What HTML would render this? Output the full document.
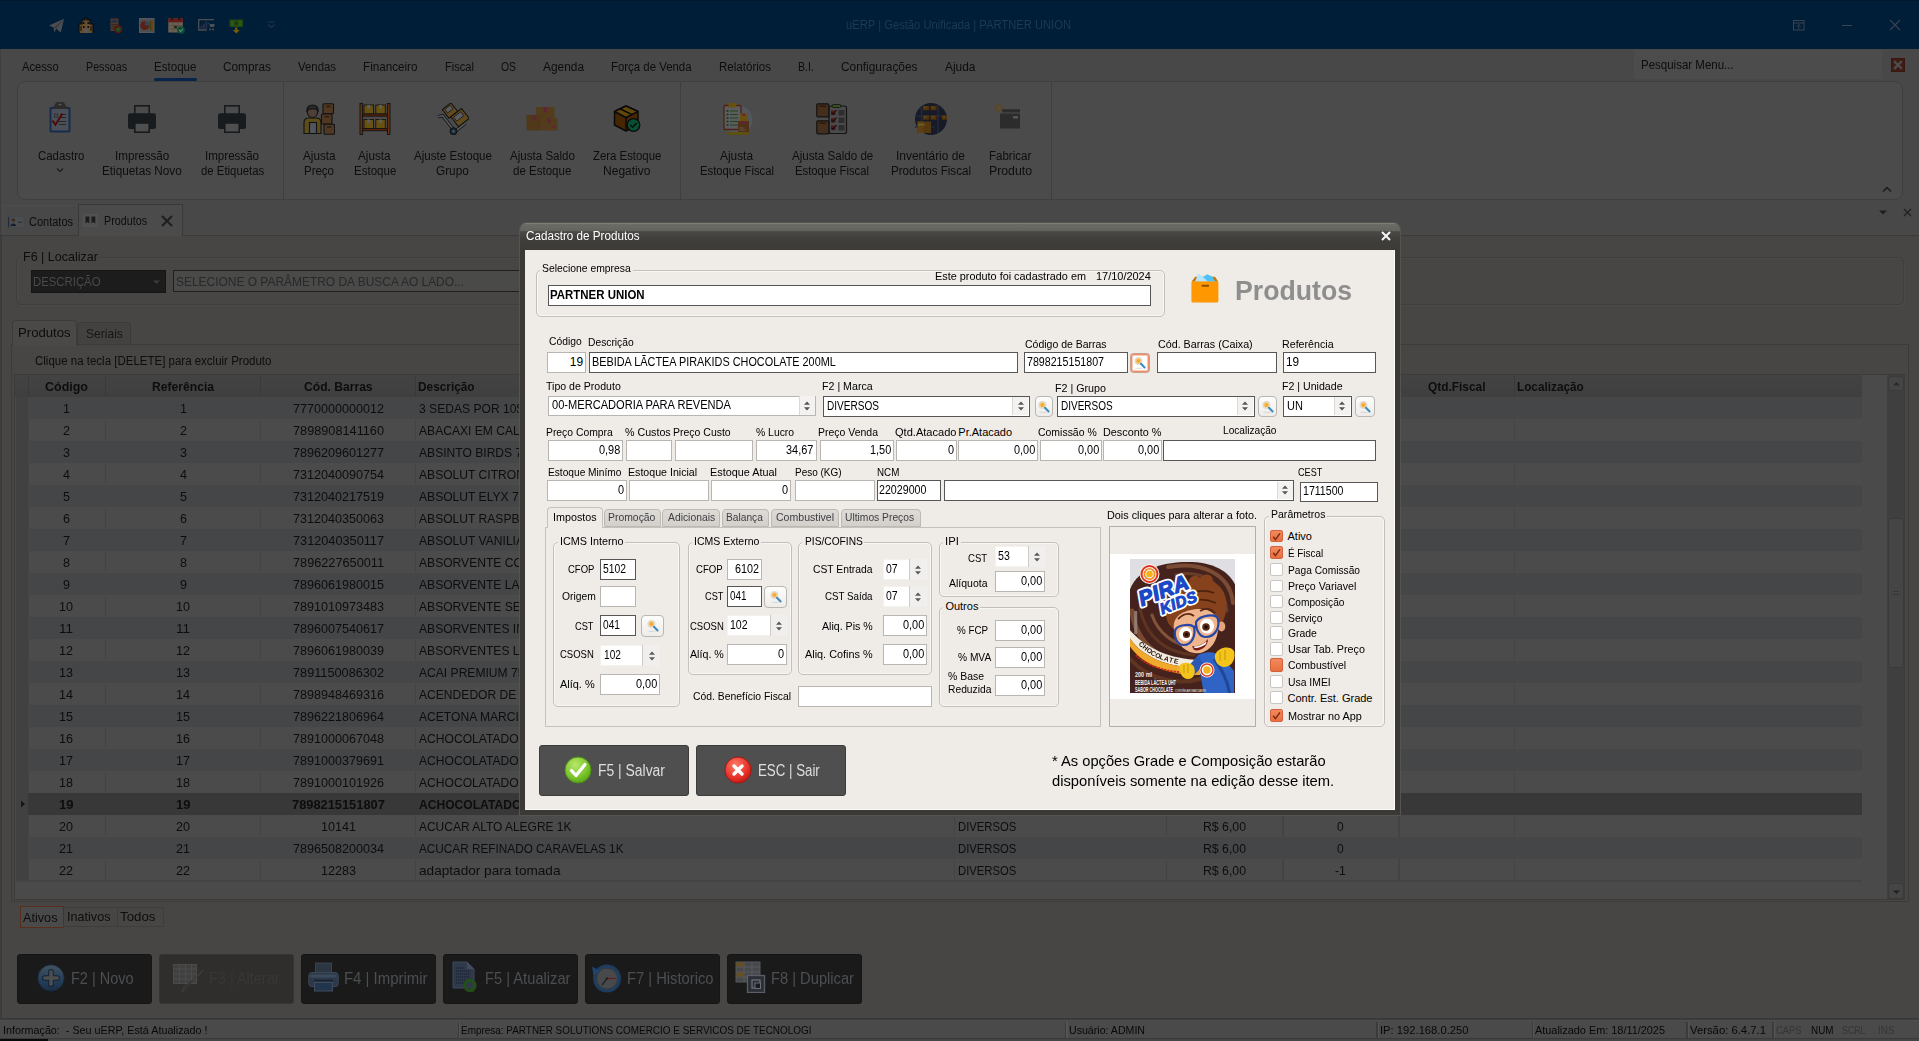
<!DOCTYPE html>
<html lang="pt-BR"><head><meta charset="utf-8"><title>uERP | Gestão Unificada | PARTNER UNION</title>
<style>
html,body{margin:0;padding:0;}
body{width:1919px;height:1041px;overflow:hidden;position:relative;background:#4c4c4c;font-family:"Liberation Sans",sans-serif;}
div,span,svg{position:absolute;box-sizing:border-box;}
.t{white-space:pre;line-height:1;transform-origin:0 50%;}

</style></head><body>

<div style="left:0px;top:0px;width:1919px;height:49px;background:#001e38;"></div>
<div style="left:0px;top:0px;width:1919px;height:1px;background:#00162b;"></div>
<span class="t" style="left:846px;top:18.84px;font-size:12px;color:#1e3953;transform:scaleX(0.9337);">uERP | Gestão Unificada | PARTNER UNION</span>
<div style="left:0px;top:49px;width:1919px;height:187px;background:#484848;"></div>
<div style="left:0px;top:49px;width:1px;height:992px;background:#3e3e3e;"></div>
<div style="left:1918px;top:236px;width:1px;height:783px;background:#3a3a3a;"></div>
<span class="t" style="left:22px;top:61.22px;font-size:12.5px;color:#0d0d0d;transform:scaleX(0.8927);">Acesso</span>
<span class="t" style="left:86px;top:61.22px;font-size:12.5px;color:#0d0d0d;transform:scaleX(0.855);">Pessoas</span>
<span class="t" style="left:154px;top:61.22px;font-size:12.5px;color:#0d0d0d;transform:scaleX(0.9264);">Estoque</span>
<span class="t" style="left:223px;top:61.22px;font-size:12.5px;color:#0d0d0d;transform:scaleX(0.9464);">Compras</span>
<span class="t" style="left:298px;top:61.22px;font-size:12.5px;color:#0d0d0d;transform:scaleX(0.9109);">Vendas</span>
<span class="t" style="left:363px;top:61.22px;font-size:12.5px;color:#0d0d0d;transform:scaleX(0.9336);">Financeiro</span>
<span class="t" style="left:445px;top:61.22px;font-size:12.5px;color:#0d0d0d;transform:scaleX(0.888);">Fiscal</span>
<span class="t" style="left:501px;top:61.22px;font-size:12.5px;color:#0d0d0d;transform:scaleX(0.8304);">OS</span>
<span class="t" style="left:543px;top:61.22px;font-size:12.5px;color:#0d0d0d;transform:scaleX(0.9511);">Agenda</span>
<span class="t" style="left:611px;top:61.22px;font-size:12.5px;color:#0d0d0d;transform:scaleX(0.912);">Força de Venda</span>
<span class="t" style="left:719px;top:61.22px;font-size:12.5px;color:#0d0d0d;transform:scaleX(0.9239);">Relatórios</span>
<span class="t" style="left:798px;top:61.22px;font-size:12.5px;color:#0d0d0d;transform:scaleX(0.8526);">B.I.</span>
<span class="t" style="left:841px;top:61.22px;font-size:12.5px;color:#0d0d0d;transform:scaleX(0.949);">Configurações</span>
<span class="t" style="left:945px;top:61.22px;font-size:12.5px;color:#0d0d0d;transform:scaleX(0.9536);">Ajuda</span>
<div style="left:154px;top:78px;width:43px;height:3px;background:#08244a;border-radius:1.5px;"></div>
<div style="left:1634px;top:50px;width:248px;height:29px;background:#4c4c4c;"></div>
<span class="t" style="left:1641px;top:58.3px;font-size:13px;color:#0d0d0d;transform:scaleX(0.8847);">Pesquisar Menu...</span>
<div style="left:1891px;top:58px;width:14px;height:14px;background:#3f1c13;border:1px solid #3a1810;"></div>
<svg style="left:1891px;top:58px;" width="14" height="14" viewBox="0 0 14 14"><path d="M4 4L10 10M10 4L4 10" stroke="#4d4d4d" stroke-width="2.4" stroke-linecap="square"/></svg>
<div style="left:17px;top:81px;width:1886px;height:119px;background:#4b4b4b;border:1px solid #3f3f3f;border-radius:8px;"></div>
<div style="left:283px;top:82px;width:1px;height:117px;background:#3f3f3f;"></div>
<div style="left:680px;top:82px;width:1px;height:117px;background:#3f3f3f;"></div>
<div style="left:1051px;top:82px;width:1px;height:117px;background:#3f3f3f;"></div>
<svg style="left:1880px;top:184px;" width="14" height="10" viewBox="0 0 14 10"><path d="M3 7.5L7 3.5L11 7.5" stroke="#1a1a1a" stroke-width="1.4" fill="none"/></svg>
<span class="t" style="left:37.5px;top:149.72px;font-size:12.5px;color:#0d0d0d;transform:scaleX(0.9126);">Cadastro</span>
<span class="t" style="left:115px;top:149.72px;font-size:12.5px;color:#0d0d0d;transform:scaleX(0.9304);">Impressão</span>
<span class="t" style="left:102px;top:164.72px;font-size:12.5px;color:#0d0d0d;transform:scaleX(0.9412);">Etiquetas Novo</span>
<span class="t" style="left:205px;top:149.72px;font-size:12.5px;color:#0d0d0d;transform:scaleX(0.9253);">Impressão</span>
<span class="t" style="left:200.5px;top:164.72px;font-size:12.5px;color:#0d0d0d;transform:scaleX(0.9108);">de Etiquetas</span>
<span class="t" style="left:303px;top:149.72px;font-size:12.5px;color:#0d0d0d;transform:scaleX(0.9353);">Ajusta</span>
<span class="t" style="left:304px;top:164.72px;font-size:12.5px;color:#0d0d0d;transform:scaleX(0.9187);">Preço</span>
<span class="t" style="left:358px;top:149.72px;font-size:12.5px;color:#0d0d0d;transform:scaleX(0.9353);">Ajusta</span>
<span class="t" style="left:354px;top:164.72px;font-size:12.5px;color:#0d0d0d;transform:scaleX(0.9221);">Estoque</span>
<span class="t" style="left:414px;top:149.72px;font-size:12.5px;color:#0d0d0d;transform:scaleX(0.9275);">Ajuste Estoque</span>
<span class="t" style="left:436px;top:164.72px;font-size:12.5px;color:#0d0d0d;transform:scaleX(0.9439);">Grupo</span>
<span class="t" style="left:510px;top:149.72px;font-size:12.5px;color:#0d0d0d;transform:scaleX(0.9261);">Ajusta Saldo</span>
<span class="t" style="left:513px;top:164.72px;font-size:12.5px;color:#0d0d0d;transform:scaleX(0.9217);">de Estoque</span>
<span class="t" style="left:593px;top:149.72px;font-size:12.5px;color:#0d0d0d;transform:scaleX(0.9101);">Zera Estoque</span>
<span class="t" style="left:603px;top:164.72px;font-size:12.5px;color:#0d0d0d;transform:scaleX(0.9626);">Negativo</span>
<span class="t" style="left:720px;top:149.72px;font-size:12.5px;color:#0d0d0d;transform:scaleX(0.9496);">Ajusta</span>
<span class="t" style="left:700px;top:164.72px;font-size:12.5px;color:#0d0d0d;transform:scaleX(0.9026);">Estoque Fiscal</span>
<span class="t" style="left:792px;top:149.72px;font-size:12.5px;color:#0d0d0d;transform:scaleX(0.9285);">Ajusta Saldo de</span>
<span class="t" style="left:795px;top:164.72px;font-size:12.5px;color:#0d0d0d;transform:scaleX(0.9026);">Estoque Fiscal</span>
<span class="t" style="left:896px;top:149.72px;font-size:12.5px;color:#0d0d0d;transform:scaleX(0.9546);">Inventário de</span>
<span class="t" style="left:891px;top:164.72px;font-size:12.5px;color:#0d0d0d;transform:scaleX(0.9285);">Produtos Fiscal</span>
<span class="t" style="left:989px;top:149.72px;font-size:12.5px;color:#0d0d0d;transform:scaleX(0.9227);">Fabricar</span>
<span class="t" style="left:989px;top:164.72px;font-size:12.5px;color:#0d0d0d;transform:scaleX(0.9822);">Produto</span>
<svg style="left:54px;top:166px;" width="12" height="8" viewBox="0 0 12 8"><path d="M3 2.5L6 5.5L9 2.5" stroke="#1a1a1a" stroke-width="1.2" fill="none"/></svg>
<div style="left:0px;top:235px;width:1919px;height:1px;background:#3a3a3a;"></div>
<div style="left:3px;top:205px;width:75px;height:30px;background:#484848;"></div>
<div style="left:3px;top:205px;width:75px;height:1px;background:#4d4d4d;"></div>
<div style="left:3px;top:205px;width:1px;height:30px;background:#4c4c4c;"></div>
<div style="left:78px;top:204px;width:105px;height:32px;background:#4b4b4b;border:1px solid #393939;border-bottom:none;"></div>
<span class="t" style="left:28.5px;top:216.42px;font-size:12.5px;color:#0d0d0d;transform:scaleX(0.8795);">Contatos</span>
<span class="t" style="left:103.5px;top:215.42px;font-size:12.5px;color:#0d0d0d;transform:scaleX(0.8595);">Produtos</span>
<svg style="left:160px;top:214px;" width="14" height="14" viewBox="0 0 14 14"><path d="M2 2L12 12M12 2L2 12" stroke="#1e1e1e" stroke-width="2"/></svg>
<svg style="left:1877px;top:208px;" width="12" height="8" viewBox="0 0 12 8"><path d="M2 2.5h8L6 6.5z" fill="#1f1f1f"/></svg>
<svg style="left:1902px;top:207px;" width="11" height="11" viewBox="0 0 11 11"><path d="M2 2L9 9M9 2L2 9" stroke="#1f1f1f" stroke-width="1.2"/></svg>
<div style="left:1px;top:236px;width:1918px;height:783px;background:#474644;"></div>
<div style="left:1px;top:236px;width:1px;height:783px;background:#393938;"></div>
<div style="left:16px;top:257px;width:1888px;height:48px;border:1px solid #3f3e3c;border-radius:5px;box-shadow:inset 1px 1px 0 #4b4a48,1px 1px 0 #4b4a48;"></div>
<div style="left:21px;top:250px;width:79px;height:14px;background:#474644;"></div>
<span class="t" style="left:23px;top:250px;font-size:13px;color:#0d0d0d;transform:scaleX(0.964);">F6 | Localizar</span>
<div style="left:31px;top:270px;width:135px;height:23px;background:#1c1c1c;border:1px solid #151515;"></div>
<span class="t" style="left:33px;top:275px;font-size:13px;color:#4a4a4a;transform:scaleX(0.8733);">DESCRIÇÃO</span>
<svg style="left:152px;top:279px;" width="9" height="6" viewBox="0 0 9 6"><path d="M1 1.5h7L4.5 5z" fill="#3a3a3a"/></svg>
<div style="left:173px;top:270px;width:1100px;height:22px;background:#4a4a48;border:1px solid #1f1f1f;"></div>
<span class="t" style="left:176px;top:275px;font-size:13px;color:#2a282c;transform:scaleX(0.9193);">SELECIONE O PARÂMETRO DA BUSCA AO LADO...</span>
<div style="left:77px;top:322px;width:54px;height:23px;background:#434241;border:1px solid #3b3a39;border-radius:4px 4px 0 0;"></div>
<div style="left:11px;top:344px;width:1898px;height:558px;border:1px solid #3c3b3a;"></div>
<div style="left:12px;top:320px;width:65px;height:26px;background:#4a4948;border:1px solid #3d3c3b;border-radius:4px 4px 0 0;border-bottom:none;"></div>
<span class="t" style="left:18px;top:325.8px;font-size:13px;color:#0d0d0d;transform:scaleX(1.0106);">Produtos</span>
<span class="t" style="left:85.6px;top:326.5px;font-size:13px;color:#161616;transform:scaleX(0.9283);">Seriais</span>
<span class="t" style="left:34.6px;top:354.64px;font-size:12px;color:#0d0d0d;transform:scaleX(0.9579);">Clique na tecla [DELETE] para excluir Produto</span>
<div style="left:14px;top:374px;width:1891px;height:526px;background:#4a4a4a;border:1px solid #3b3b3b;"></div>
<div style="left:15px;top:375px;width:1847px;height:22px;background:linear-gradient(#434343,#3f3f3f);"></div>
<div style="left:28px;top:397px;width:1834px;height:22px;background:#454648;"></div>
<div style="left:28px;top:419px;width:1834px;height:22px;background:#4b4b4b;"></div>
<div style="left:28px;top:441px;width:1834px;height:22px;background:#454648;"></div>
<div style="left:28px;top:463px;width:1834px;height:22px;background:#4b4b4b;"></div>
<div style="left:28px;top:485px;width:1834px;height:22px;background:#454648;"></div>
<div style="left:28px;top:507px;width:1834px;height:22px;background:#4b4b4b;"></div>
<div style="left:28px;top:529px;width:1834px;height:22px;background:#454648;"></div>
<div style="left:28px;top:551px;width:1834px;height:22px;background:#4b4b4b;"></div>
<div style="left:28px;top:573px;width:1834px;height:22px;background:#454648;"></div>
<div style="left:28px;top:595px;width:1834px;height:22px;background:#4b4b4b;"></div>
<div style="left:28px;top:617px;width:1834px;height:22px;background:#454648;"></div>
<div style="left:28px;top:639px;width:1834px;height:22px;background:#4b4b4b;"></div>
<div style="left:28px;top:661px;width:1834px;height:22px;background:#454648;"></div>
<div style="left:28px;top:683px;width:1834px;height:22px;background:#4b4b4b;"></div>
<div style="left:28px;top:705px;width:1834px;height:22px;background:#454648;"></div>
<div style="left:28px;top:727px;width:1834px;height:22px;background:#4b4b4b;"></div>
<div style="left:28px;top:749px;width:1834px;height:22px;background:#454648;"></div>
<div style="left:28px;top:771px;width:1834px;height:22px;background:#4b4b4b;"></div>
<div style="left:28px;top:793px;width:1834px;height:22px;background:#383838;"></div>
<div style="left:28px;top:815px;width:1834px;height:22px;background:#4b4b4b;"></div>
<div style="left:28px;top:837px;width:1834px;height:22px;background:#454648;"></div>
<div style="left:28px;top:859px;width:1834px;height:22px;background:#4b4b4b;"></div>
<div style="left:16px;top:397px;width:12px;height:484px;background:#414141;"></div>
<div style="left:28px;top:375px;width:1px;height:22px;background:#3a3a3a;"></div>
<div style="left:28px;top:419px;width:1px;height:22px;background:#444444;"></div>
<div style="left:28px;top:463px;width:1px;height:22px;background:#444444;"></div>
<div style="left:28px;top:507px;width:1px;height:22px;background:#444444;"></div>
<div style="left:28px;top:551px;width:1px;height:22px;background:#444444;"></div>
<div style="left:28px;top:595px;width:1px;height:22px;background:#444444;"></div>
<div style="left:28px;top:639px;width:1px;height:22px;background:#444444;"></div>
<div style="left:28px;top:683px;width:1px;height:22px;background:#444444;"></div>
<div style="left:28px;top:727px;width:1px;height:22px;background:#444444;"></div>
<div style="left:28px;top:771px;width:1px;height:22px;background:#444444;"></div>
<div style="left:28px;top:815px;width:1px;height:22px;background:#444444;"></div>
<div style="left:28px;top:859px;width:1px;height:22px;background:#444444;"></div>
<div style="left:105px;top:375px;width:1px;height:22px;background:#3a3a3a;"></div>
<div style="left:105px;top:419px;width:1px;height:22px;background:#444444;"></div>
<div style="left:105px;top:463px;width:1px;height:22px;background:#444444;"></div>
<div style="left:105px;top:507px;width:1px;height:22px;background:#444444;"></div>
<div style="left:105px;top:551px;width:1px;height:22px;background:#444444;"></div>
<div style="left:105px;top:595px;width:1px;height:22px;background:#444444;"></div>
<div style="left:105px;top:639px;width:1px;height:22px;background:#444444;"></div>
<div style="left:105px;top:683px;width:1px;height:22px;background:#444444;"></div>
<div style="left:105px;top:727px;width:1px;height:22px;background:#444444;"></div>
<div style="left:105px;top:771px;width:1px;height:22px;background:#444444;"></div>
<div style="left:105px;top:815px;width:1px;height:22px;background:#444444;"></div>
<div style="left:105px;top:859px;width:1px;height:22px;background:#444444;"></div>
<div style="left:260px;top:375px;width:1px;height:22px;background:#3a3a3a;"></div>
<div style="left:260px;top:419px;width:1px;height:22px;background:#444444;"></div>
<div style="left:260px;top:463px;width:1px;height:22px;background:#444444;"></div>
<div style="left:260px;top:507px;width:1px;height:22px;background:#444444;"></div>
<div style="left:260px;top:551px;width:1px;height:22px;background:#444444;"></div>
<div style="left:260px;top:595px;width:1px;height:22px;background:#444444;"></div>
<div style="left:260px;top:639px;width:1px;height:22px;background:#444444;"></div>
<div style="left:260px;top:683px;width:1px;height:22px;background:#444444;"></div>
<div style="left:260px;top:727px;width:1px;height:22px;background:#444444;"></div>
<div style="left:260px;top:771px;width:1px;height:22px;background:#444444;"></div>
<div style="left:260px;top:815px;width:1px;height:22px;background:#444444;"></div>
<div style="left:260px;top:859px;width:1px;height:22px;background:#444444;"></div>
<div style="left:415px;top:375px;width:1px;height:22px;background:#3a3a3a;"></div>
<div style="left:415px;top:419px;width:1px;height:22px;background:#444444;"></div>
<div style="left:415px;top:463px;width:1px;height:22px;background:#444444;"></div>
<div style="left:415px;top:507px;width:1px;height:22px;background:#444444;"></div>
<div style="left:415px;top:551px;width:1px;height:22px;background:#444444;"></div>
<div style="left:415px;top:595px;width:1px;height:22px;background:#444444;"></div>
<div style="left:415px;top:639px;width:1px;height:22px;background:#444444;"></div>
<div style="left:415px;top:683px;width:1px;height:22px;background:#444444;"></div>
<div style="left:415px;top:727px;width:1px;height:22px;background:#444444;"></div>
<div style="left:415px;top:771px;width:1px;height:22px;background:#444444;"></div>
<div style="left:415px;top:815px;width:1px;height:22px;background:#444444;"></div>
<div style="left:415px;top:859px;width:1px;height:22px;background:#444444;"></div>
<div style="left:954px;top:375px;width:1px;height:22px;background:#3a3a3a;"></div>
<div style="left:954px;top:419px;width:1px;height:22px;background:#444444;"></div>
<div style="left:954px;top:463px;width:1px;height:22px;background:#444444;"></div>
<div style="left:954px;top:507px;width:1px;height:22px;background:#444444;"></div>
<div style="left:954px;top:551px;width:1px;height:22px;background:#444444;"></div>
<div style="left:954px;top:595px;width:1px;height:22px;background:#444444;"></div>
<div style="left:954px;top:639px;width:1px;height:22px;background:#444444;"></div>
<div style="left:954px;top:683px;width:1px;height:22px;background:#444444;"></div>
<div style="left:954px;top:727px;width:1px;height:22px;background:#444444;"></div>
<div style="left:954px;top:771px;width:1px;height:22px;background:#444444;"></div>
<div style="left:954px;top:815px;width:1px;height:22px;background:#444444;"></div>
<div style="left:954px;top:859px;width:1px;height:22px;background:#444444;"></div>
<div style="left:1166px;top:375px;width:1px;height:22px;background:#3a3a3a;"></div>
<div style="left:1166px;top:419px;width:1px;height:22px;background:#444444;"></div>
<div style="left:1166px;top:463px;width:1px;height:22px;background:#444444;"></div>
<div style="left:1166px;top:507px;width:1px;height:22px;background:#444444;"></div>
<div style="left:1166px;top:551px;width:1px;height:22px;background:#444444;"></div>
<div style="left:1166px;top:595px;width:1px;height:22px;background:#444444;"></div>
<div style="left:1166px;top:639px;width:1px;height:22px;background:#444444;"></div>
<div style="left:1166px;top:683px;width:1px;height:22px;background:#444444;"></div>
<div style="left:1166px;top:727px;width:1px;height:22px;background:#444444;"></div>
<div style="left:1166px;top:771px;width:1px;height:22px;background:#444444;"></div>
<div style="left:1166px;top:815px;width:1px;height:22px;background:#444444;"></div>
<div style="left:1166px;top:859px;width:1px;height:22px;background:#444444;"></div>
<div style="left:1282px;top:375px;width:2px;height:22px;background:#3a3a3a;"></div>
<div style="left:1282px;top:419px;width:2px;height:22px;background:#444444;"></div>
<div style="left:1282px;top:463px;width:2px;height:22px;background:#444444;"></div>
<div style="left:1282px;top:507px;width:2px;height:22px;background:#444444;"></div>
<div style="left:1282px;top:551px;width:2px;height:22px;background:#444444;"></div>
<div style="left:1282px;top:595px;width:2px;height:22px;background:#444444;"></div>
<div style="left:1282px;top:639px;width:2px;height:22px;background:#444444;"></div>
<div style="left:1282px;top:683px;width:2px;height:22px;background:#444444;"></div>
<div style="left:1282px;top:727px;width:2px;height:22px;background:#444444;"></div>
<div style="left:1282px;top:771px;width:2px;height:22px;background:#444444;"></div>
<div style="left:1282px;top:815px;width:2px;height:22px;background:#444444;"></div>
<div style="left:1282px;top:859px;width:2px;height:22px;background:#444444;"></div>
<div style="left:1398px;top:375px;width:2px;height:22px;background:#3a3a3a;"></div>
<div style="left:1398px;top:419px;width:2px;height:22px;background:#444444;"></div>
<div style="left:1398px;top:463px;width:2px;height:22px;background:#444444;"></div>
<div style="left:1398px;top:507px;width:2px;height:22px;background:#444444;"></div>
<div style="left:1398px;top:551px;width:2px;height:22px;background:#444444;"></div>
<div style="left:1398px;top:595px;width:2px;height:22px;background:#444444;"></div>
<div style="left:1398px;top:639px;width:2px;height:22px;background:#444444;"></div>
<div style="left:1398px;top:683px;width:2px;height:22px;background:#444444;"></div>
<div style="left:1398px;top:727px;width:2px;height:22px;background:#444444;"></div>
<div style="left:1398px;top:771px;width:2px;height:22px;background:#444444;"></div>
<div style="left:1398px;top:815px;width:2px;height:22px;background:#444444;"></div>
<div style="left:1398px;top:859px;width:2px;height:22px;background:#444444;"></div>
<div style="left:1514px;top:375px;width:1px;height:22px;background:#3a3a3a;"></div>
<div style="left:1514px;top:419px;width:1px;height:22px;background:#444444;"></div>
<div style="left:1514px;top:463px;width:1px;height:22px;background:#444444;"></div>
<div style="left:1514px;top:507px;width:1px;height:22px;background:#444444;"></div>
<div style="left:1514px;top:551px;width:1px;height:22px;background:#444444;"></div>
<div style="left:1514px;top:595px;width:1px;height:22px;background:#444444;"></div>
<div style="left:1514px;top:639px;width:1px;height:22px;background:#444444;"></div>
<div style="left:1514px;top:683px;width:1px;height:22px;background:#444444;"></div>
<div style="left:1514px;top:727px;width:1px;height:22px;background:#444444;"></div>
<div style="left:1514px;top:771px;width:1px;height:22px;background:#444444;"></div>
<div style="left:1514px;top:815px;width:1px;height:22px;background:#444444;"></div>
<div style="left:1514px;top:859px;width:1px;height:22px;background:#444444;"></div>
<div style="left:16px;top:880px;width:1846px;height:2px;background:#444;"></div>
<span class="t" style="left:45px;top:379.7px;font-size:13px;color:#0d0d0d;font-weight:bold;transform:scaleX(0.9606);">Código</span>
<span class="t" style="left:152px;top:379.7px;font-size:13px;color:#0d0d0d;font-weight:bold;transform:scaleX(0.9325);">Referência</span>
<span class="t" style="left:304px;top:379.7px;font-size:13px;color:#0d0d0d;font-weight:bold;transform:scaleX(0.9308);">Cód. Barras</span>
<span class="t" style="left:418px;top:379.7px;font-size:13px;color:#0d0d0d;font-weight:bold;transform:scaleX(0.9106);">Descrição</span>
<span class="t" style="left:1427.5px;top:379.7px;font-size:13px;color:#0d0d0d;font-weight:bold;transform:scaleX(0.9147);">Qtd.Fiscal</span>
<span class="t" style="left:1517px;top:379.7px;font-size:13px;color:#0d0d0d;font-weight:bold;transform:scaleX(0.905);">Localização</span>
<span class="t" style="left:62.7px;top:401.7px;font-size:13px;color:#0d0d0d;transform:scaleX(0.9676);">1</span>
<span class="t" style="left:179.5px;top:401.7px;font-size:13px;color:#0d0d0d;transform:scaleX(0.9676);">1</span>
<span class="t" style="left:293px;top:401.7px;font-size:13px;color:#0d0d0d;transform:scaleX(0.9681);">7770000000012</span>
<div style="left:415px;top:397px;width:104px;height:22px;overflow:hidden;">
<span class="t" style="left:4px;top:4.7px;font-size:13px;color:#0d0d0d;transform:scaleX(0.93);">3 SEDAS POR 10$</span>
</div>
<span class="t" style="left:62.7px;top:423.7px;font-size:13px;color:#0d0d0d;transform:scaleX(0.9676);">2</span>
<span class="t" style="left:179.5px;top:423.7px;font-size:13px;color:#0d0d0d;transform:scaleX(0.9676);">2</span>
<span class="t" style="left:293px;top:423.7px;font-size:13px;color:#0d0d0d;transform:scaleX(0.9782);">7898908141160</span>
<div style="left:415px;top:419px;width:104px;height:22px;overflow:hidden;">
<span class="t" style="left:4px;top:4.7px;font-size:13px;color:#0d0d0d;transform:scaleX(0.93);">ABACAXI EM CALDA</span>
</div>
<span class="t" style="left:62.7px;top:445.7px;font-size:13px;color:#0d0d0d;transform:scaleX(0.9676);">3</span>
<span class="t" style="left:179.5px;top:445.7px;font-size:13px;color:#0d0d0d;transform:scaleX(0.9676);">3</span>
<span class="t" style="left:293px;top:445.7px;font-size:13px;color:#0d0d0d;transform:scaleX(0.9681);">7896209601277</span>
<div style="left:415px;top:441px;width:104px;height:22px;overflow:hidden;">
<span class="t" style="left:4px;top:4.7px;font-size:13px;color:#0d0d0d;transform:scaleX(0.93);">ABSINTO BIRDS 750ML</span>
</div>
<span class="t" style="left:62.7px;top:467.7px;font-size:13px;color:#0d0d0d;transform:scaleX(0.9676);">4</span>
<span class="t" style="left:179.5px;top:467.7px;font-size:13px;color:#0d0d0d;transform:scaleX(0.9676);">4</span>
<span class="t" style="left:293px;top:467.7px;font-size:13px;color:#0d0d0d;transform:scaleX(0.9681);">7312040090754</span>
<div style="left:415px;top:463px;width:104px;height:22px;overflow:hidden;">
<span class="t" style="left:4px;top:4.7px;font-size:13px;color:#0d0d0d;transform:scaleX(0.93);">ABSOLUT CITRON 1L</span>
</div>
<span class="t" style="left:62.7px;top:489.7px;font-size:13px;color:#0d0d0d;transform:scaleX(0.9676);">5</span>
<span class="t" style="left:179.5px;top:489.7px;font-size:13px;color:#0d0d0d;transform:scaleX(0.9676);">5</span>
<span class="t" style="left:293px;top:489.7px;font-size:13px;color:#0d0d0d;transform:scaleX(0.9681);">7312040217519</span>
<div style="left:415px;top:485px;width:104px;height:22px;overflow:hidden;">
<span class="t" style="left:4px;top:4.7px;font-size:13px;color:#0d0d0d;transform:scaleX(0.93);">ABSOLUT ELYX 750ML</span>
</div>
<span class="t" style="left:62.7px;top:511.7px;font-size:13px;color:#0d0d0d;transform:scaleX(0.9676);">6</span>
<span class="t" style="left:179.5px;top:511.7px;font-size:13px;color:#0d0d0d;transform:scaleX(0.9676);">6</span>
<span class="t" style="left:293px;top:511.7px;font-size:13px;color:#0d0d0d;transform:scaleX(0.9681);">7312040350063</span>
<div style="left:415px;top:507px;width:104px;height:22px;overflow:hidden;">
<span class="t" style="left:4px;top:4.7px;font-size:13px;color:#0d0d0d;transform:scaleX(0.93);">ABSOLUT RASPBERRI</span>
</div>
<span class="t" style="left:62.7px;top:533.7px;font-size:13px;color:#0d0d0d;transform:scaleX(0.9676);">7</span>
<span class="t" style="left:179.5px;top:533.7px;font-size:13px;color:#0d0d0d;transform:scaleX(0.9676);">7</span>
<span class="t" style="left:293px;top:533.7px;font-size:13px;color:#0d0d0d;transform:scaleX(0.9782);">7312040350117</span>
<div style="left:415px;top:529px;width:104px;height:22px;overflow:hidden;">
<span class="t" style="left:4px;top:4.7px;font-size:13px;color:#0d0d0d;transform:scaleX(0.93);">ABSOLUT VANILIA 1L</span>
</div>
<span class="t" style="left:62.7px;top:555.7px;font-size:13px;color:#0d0d0d;transform:scaleX(0.9676);">8</span>
<span class="t" style="left:179.5px;top:555.7px;font-size:13px;color:#0d0d0d;transform:scaleX(0.9676);">8</span>
<span class="t" style="left:293px;top:555.7px;font-size:13px;color:#0d0d0d;transform:scaleX(0.9782);">7896227650011</span>
<div style="left:415px;top:551px;width:104px;height:22px;overflow:hidden;">
<span class="t" style="left:4px;top:4.7px;font-size:13px;color:#0d0d0d;transform:scaleX(0.93);">ABSORVENTE COM ABAS</span>
</div>
<span class="t" style="left:62.7px;top:577.7px;font-size:13px;color:#0d0d0d;transform:scaleX(0.9676);">9</span>
<span class="t" style="left:179.5px;top:577.7px;font-size:13px;color:#0d0d0d;transform:scaleX(0.9676);">9</span>
<span class="t" style="left:293px;top:577.7px;font-size:13px;color:#0d0d0d;transform:scaleX(0.9681);">7896061980015</span>
<div style="left:415px;top:573px;width:104px;height:22px;overflow:hidden;">
<span class="t" style="left:4px;top:4.7px;font-size:13px;color:#0d0d0d;transform:scaleX(0.93);">ABSORVENTE LADY</span>
</div>
<span class="t" style="left:59.2px;top:599.7px;font-size:13px;color:#0d0d0d;transform:scaleX(0.9676);">10</span>
<span class="t" style="left:176px;top:599.7px;font-size:13px;color:#0d0d0d;transform:scaleX(0.9676);">10</span>
<span class="t" style="left:293px;top:599.7px;font-size:13px;color:#0d0d0d;transform:scaleX(0.9681);">7891010973483</span>
<div style="left:415px;top:595px;width:104px;height:22px;overflow:hidden;">
<span class="t" style="left:4px;top:4.7px;font-size:13px;color:#0d0d0d;transform:scaleX(0.93);">ABSORVENTE SEMPRE</span>
</div>
<span class="t" style="left:59.2px;top:621.7px;font-size:13px;color:#0d0d0d;transform:scaleX(1.037);">11</span>
<span class="t" style="left:176px;top:621.7px;font-size:13px;color:#0d0d0d;transform:scaleX(1.037);">11</span>
<span class="t" style="left:293px;top:621.7px;font-size:13px;color:#0d0d0d;transform:scaleX(0.9681);">7896007540617</span>
<div style="left:415px;top:617px;width:104px;height:22px;overflow:hidden;">
<span class="t" style="left:4px;top:4.7px;font-size:13px;color:#0d0d0d;transform:scaleX(0.93);">ABSORVENTES INTIMUS</span>
</div>
<span class="t" style="left:59.2px;top:643.7px;font-size:13px;color:#0d0d0d;transform:scaleX(0.9676);">12</span>
<span class="t" style="left:176px;top:643.7px;font-size:13px;color:#0d0d0d;transform:scaleX(0.9676);">12</span>
<span class="t" style="left:293px;top:643.7px;font-size:13px;color:#0d0d0d;transform:scaleX(0.9681);">7896061980039</span>
<div style="left:415px;top:639px;width:104px;height:22px;overflow:hidden;">
<span class="t" style="left:4px;top:4.7px;font-size:13px;color:#0d0d0d;transform:scaleX(0.93);">ABSORVENTES LADY</span>
</div>
<span class="t" style="left:59.2px;top:665.7px;font-size:13px;color:#0d0d0d;transform:scaleX(0.9676);">13</span>
<span class="t" style="left:176px;top:665.7px;font-size:13px;color:#0d0d0d;transform:scaleX(0.9676);">13</span>
<span class="t" style="left:293px;top:665.7px;font-size:13px;color:#0d0d0d;transform:scaleX(0.9782);">7891150086302</span>
<div style="left:415px;top:661px;width:104px;height:22px;overflow:hidden;">
<span class="t" style="left:4px;top:4.7px;font-size:13px;color:#0d0d0d;transform:scaleX(0.93);">ACAI PREMIUM 750ML</span>
</div>
<span class="t" style="left:59.2px;top:687.7px;font-size:13px;color:#0d0d0d;transform:scaleX(0.9676);">14</span>
<span class="t" style="left:176px;top:687.7px;font-size:13px;color:#0d0d0d;transform:scaleX(0.9676);">14</span>
<span class="t" style="left:293px;top:687.7px;font-size:13px;color:#0d0d0d;transform:scaleX(0.9681);">7898948469316</span>
<div style="left:415px;top:683px;width:104px;height:22px;overflow:hidden;">
<span class="t" style="left:4px;top:4.7px;font-size:13px;color:#0d0d0d;transform:scaleX(0.93);">ACENDEDOR DE FOGAO</span>
</div>
<span class="t" style="left:59.2px;top:709.7px;font-size:13px;color:#0d0d0d;transform:scaleX(0.9676);">15</span>
<span class="t" style="left:176px;top:709.7px;font-size:13px;color:#0d0d0d;transform:scaleX(0.9676);">15</span>
<span class="t" style="left:293px;top:709.7px;font-size:13px;color:#0d0d0d;transform:scaleX(0.9681);">7896221806964</span>
<div style="left:415px;top:705px;width:104px;height:22px;overflow:hidden;">
<span class="t" style="left:4px;top:4.7px;font-size:13px;color:#0d0d0d;transform:scaleX(0.93);">ACETONA MARCIA 100</span>
</div>
<span class="t" style="left:59.2px;top:731.7px;font-size:13px;color:#0d0d0d;transform:scaleX(0.9676);">16</span>
<span class="t" style="left:176px;top:731.7px;font-size:13px;color:#0d0d0d;transform:scaleX(0.9676);">16</span>
<span class="t" style="left:293px;top:731.7px;font-size:13px;color:#0d0d0d;transform:scaleX(0.9681);">7891000067048</span>
<div style="left:415px;top:727px;width:104px;height:22px;overflow:hidden;">
<span class="t" style="left:4px;top:4.7px;font-size:13px;color:#0d0d0d;transform:scaleX(0.93);">ACHOCOLATADO NESCAU</span>
</div>
<span class="t" style="left:59.2px;top:753.7px;font-size:13px;color:#0d0d0d;transform:scaleX(0.9676);">17</span>
<span class="t" style="left:176px;top:753.7px;font-size:13px;color:#0d0d0d;transform:scaleX(0.9676);">17</span>
<span class="t" style="left:293px;top:753.7px;font-size:13px;color:#0d0d0d;transform:scaleX(0.9681);">7891000379691</span>
<div style="left:415px;top:749px;width:104px;height:22px;overflow:hidden;">
<span class="t" style="left:4px;top:4.7px;font-size:13px;color:#0d0d0d;transform:scaleX(0.93);">ACHOCOLATADO NESCAU</span>
</div>
<span class="t" style="left:59.2px;top:775.7px;font-size:13px;color:#0d0d0d;transform:scaleX(0.9676);">18</span>
<span class="t" style="left:176px;top:775.7px;font-size:13px;color:#0d0d0d;transform:scaleX(0.9676);">18</span>
<span class="t" style="left:293px;top:775.7px;font-size:13px;color:#0d0d0d;transform:scaleX(0.9681);">7891000101926</span>
<div style="left:415px;top:771px;width:104px;height:22px;overflow:hidden;">
<span class="t" style="left:4px;top:4.7px;font-size:13px;color:#0d0d0d;transform:scaleX(0.93);">ACHOCOLATADO NESCAU</span>
</div>
<span class="t" style="left:58.92px;top:797.7px;font-size:13px;color:#0d0d0d;font-weight:bold;transform:scaleX(1.0063);">19</span>
<span class="t" style="left:175.72px;top:797.7px;font-size:13px;color:#0d0d0d;font-weight:bold;transform:scaleX(1.0063);">19</span>
<span class="t" style="left:292.09px;top:797.7px;font-size:13px;color:#0d0d0d;font-weight:bold;transform:scaleX(0.9874);">7898215151807</span>
<div style="left:415px;top:793px;width:104px;height:22px;overflow:hidden;">
<span class="t" style="left:4px;top:4.7px;font-size:13px;color:#0d0d0d;font-weight:bold;transform:scaleX(0.93);">ACHOCOLATADO PIRAKIDS</span>
</div>
<span class="t" style="left:59.2px;top:819.7px;font-size:13px;color:#0d0d0d;transform:scaleX(0.9676);">20</span>
<span class="t" style="left:176px;top:819.7px;font-size:13px;color:#0d0d0d;transform:scaleX(0.9676);">20</span>
<span class="t" style="left:321px;top:819.7px;font-size:13px;color:#0d0d0d;transform:scaleX(0.968);">10141</span>
<span class="t" style="left:419px;top:819.7px;font-size:13px;color:#0d0d0d;transform:scaleX(0.9203);">ACUCAR ALTO ALEGRE 1K</span>
<span class="t" style="left:957.7px;top:819.7px;font-size:13px;color:#0d0d0d;transform:scaleX(0.8677);">DIVERSOS</span>
<span class="t" style="left:1203px;top:819.7px;font-size:13px;color:#0d0d0d;transform:scaleX(0.9441);">R$ 6,00</span>
<span class="t" style="left:1336.64px;top:819.7px;font-size:13px;color:#0d0d0d;transform:scaleX(0.93);">0</span>
<span class="t" style="left:59.2px;top:841.7px;font-size:13px;color:#0d0d0d;transform:scaleX(0.9676);">21</span>
<span class="t" style="left:176px;top:841.7px;font-size:13px;color:#0d0d0d;transform:scaleX(0.9676);">21</span>
<span class="t" style="left:293px;top:841.7px;font-size:13px;color:#0d0d0d;transform:scaleX(0.9681);">7896508200034</span>
<span class="t" style="left:419px;top:841.7px;font-size:13px;color:#0d0d0d;transform:scaleX(0.9054);">ACUCAR REFINADO CARAVELAS 1K</span>
<span class="t" style="left:957.7px;top:841.7px;font-size:13px;color:#0d0d0d;transform:scaleX(0.8677);">DIVERSOS</span>
<span class="t" style="left:1203px;top:841.7px;font-size:13px;color:#0d0d0d;transform:scaleX(0.9441);">R$ 6,00</span>
<span class="t" style="left:1336.64px;top:841.7px;font-size:13px;color:#0d0d0d;transform:scaleX(0.93);">0</span>
<span class="t" style="left:59.2px;top:863.7px;font-size:13px;color:#0d0d0d;transform:scaleX(0.9676);">22</span>
<span class="t" style="left:176px;top:863.7px;font-size:13px;color:#0d0d0d;transform:scaleX(0.9676);">22</span>
<span class="t" style="left:321px;top:863.7px;font-size:13px;color:#0d0d0d;transform:scaleX(0.968);">12283</span>
<span class="t" style="left:419px;top:863.7px;font-size:13px;color:#0d0d0d;transform:scaleX(1.0469);">adaptador para tomada</span>
<span class="t" style="left:957.7px;top:863.7px;font-size:13px;color:#0d0d0d;transform:scaleX(0.8677);">DIVERSOS</span>
<span class="t" style="left:1203px;top:863.7px;font-size:13px;color:#0d0d0d;transform:scaleX(0.9441);">R$ 6,00</span>
<span class="t" style="left:1334.62px;top:863.7px;font-size:13px;color:#0d0d0d;transform:scaleX(0.93);">-1</span>
<svg style="left:20px;top:799px;" width="6" height="10" viewBox="0 0 6 10"><path d="M1 1.5L5 5L1 8.5z" fill="#151515"/></svg>
<div style="left:1887px;top:375px;width:17px;height:524px;background:#3f3f3f;"></div>
<div style="left:1888px;top:376px;width:16px;height:15px;background:#454545;border:1px solid #3a3a3a;border-radius:3px;"></div>
<svg style="left:1891.5px;top:380.5px;" width="9" height="6" viewBox="0 0 9 6"><path d="M1 4.5h7L4.5 1z" fill="#2c2c2c"/></svg>
<div style="left:1888px;top:518px;width:16px;height:150px;background:#454545;border:1px solid #3a3a3a;border-radius:3px;"></div>
<div style="left:1893px;top:591px;width:6px;height:1px;background:#353535;"></div>
<div style="left:1893px;top:594px;width:6px;height:1px;background:#353535;"></div>
<div style="left:1888px;top:883px;width:16px;height:16px;background:#454545;border:1px solid #3a3a3a;border-radius:3px;"></div>
<svg style="left:1891.5px;top:888.5px;" width="9" height="6" viewBox="0 0 9 6"><path d="M1 1.5h7L4.5 5z" fill="#202020"/></svg>
<div style="left:63px;top:907px;width:101px;height:20px;border:1px solid #3d3d3c;"></div>
<div style="left:20px;top:906px;width:44px;height:22px;background:#4a4a4a;border:1px solid #5a2e1c;"></div>
<div style="left:117px;top:907px;width:1px;height:20px;background:#3d3d3c;"></div>
<span class="t" style="left:23px;top:910.5px;font-size:13px;color:#0d0d0d;transform:scaleX(0.9744);">Ativos</span>
<span class="t" style="left:67px;top:910px;font-size:13px;color:#0d0d0d;transform:scaleX(0.9707);">Inativos</span>
<span class="t" style="left:120px;top:910px;font-size:13px;color:#0d0d0d;transform:scaleX(1.023);">Todos</span>
<div style="left:17px;top:954px;width:135px;height:50px;background:#1a1a1a;border:1px solid #161616;border-radius:3px;"></div>
<span class="t" style="left:71px;top:971.46px;font-size:16px;color:#4c4f52;transform:scaleX(0.9048);">F2 | Novo</span>
<div style="left:159px;top:954px;width:135px;height:50px;background:#2f2e2d;border:1px solid #363535;border-radius:3px;"></div>
<span class="t" style="left:208.5px;top:971.46px;font-size:16px;color:#373737;transform:scaleX(0.9042);">F3 | Alterar</span>
<div style="left:301px;top:954px;width:135px;height:50px;background:#1a1a1a;border:1px solid #161616;border-radius:3px;"></div>
<span class="t" style="left:344px;top:971.46px;font-size:16px;color:#4c4f52;transform:scaleX(0.9331);">F4 | Imprimir</span>
<div style="left:443px;top:954px;width:135px;height:50px;background:#1a1a1a;border:1px solid #161616;border-radius:3px;"></div>
<span class="t" style="left:485px;top:971.46px;font-size:16px;color:#4c4f52;transform:scaleX(0.9184);">F5 | Atualizar</span>
<div style="left:585px;top:954px;width:135px;height:50px;background:#1a1a1a;border:1px solid #161616;border-radius:3px;"></div>
<span class="t" style="left:627px;top:971.46px;font-size:16px;color:#4c4f52;transform:scaleX(0.9207);">F7 | Historico</span>
<div style="left:727px;top:954px;width:135px;height:50px;background:#1a1a1a;border:1px solid #161616;border-radius:3px;"></div>
<span class="t" style="left:770.5px;top:971.46px;font-size:16px;color:#4c4f52;transform:scaleX(0.9181);">F8 | Duplicar</span>
<div style="left:0px;top:1019px;width:1919px;height:22px;background:#4a4a4a;"></div>
<div style="left:0px;top:1018px;width:1919px;height:2px;background:#3a3a3a;"></div>
<div style="left:0px;top:1020px;width:1919px;height:1px;background:#4f4f4e;"></div>
<div style="left:458px;top:1022px;width:1px;height:18px;background:#3b3b3b;"></div>
<div style="left:459px;top:1022px;width:1px;height:18px;background:#555;"></div>
<div style="left:1065px;top:1022px;width:1px;height:18px;background:#3b3b3b;"></div>
<div style="left:1066px;top:1022px;width:2px;height:18px;background:#555;"></div>
<div style="left:1376px;top:1022px;width:2px;height:18px;background:#3b3b3b;"></div>
<div style="left:1378px;top:1022px;width:1px;height:18px;background:#555;"></div>
<div style="left:1532px;top:1022px;width:1px;height:18px;background:#3b3b3b;"></div>
<div style="left:1533px;top:1022px;width:1px;height:18px;background:#555;"></div>
<div style="left:1686px;top:1022px;width:2px;height:18px;background:#3b3b3b;"></div>
<div style="left:1688px;top:1022px;width:1px;height:18px;background:#555;"></div>
<div style="left:1772px;top:1022px;width:2px;height:18px;background:#3b3b3b;"></div>
<div style="left:1774px;top:1022px;width:1px;height:18px;background:#555;"></div>
<div style="left:0px;top:1038px;width:1919px;height:1px;background:#3a3a3a;"></div>
<div style="left:0px;top:1039px;width:1919px;height:2px;background:#444;"></div>
<div style="left:0px;top:1039px;width:48px;height:2px;background:#0a0a0a;"></div>
<span class="t" style="left:3px;top:1024.99px;font-size:11px;color:#080808;transform:scaleX(0.9788);">Informação:  - Seu uERP, Está Atualizado !</span>
<span class="t" style="left:461px;top:1024.99px;font-size:11px;color:#080808;transform:scaleX(0.9035);">Empresa: PARTNER SOLUTIONS COMERCIO E SERVICOS DE TECNOLOGI</span>
<span class="t" style="left:1068.5px;top:1024.99px;font-size:11px;color:#080808;transform:scaleX(0.9637);">Usuário: ADMIN</span>
<span class="t" style="left:1380px;top:1024.99px;font-size:11px;color:#080808;transform:scaleX(1.0189);">IP: 192.168.0.250</span>
<span class="t" style="left:1535px;top:1024.99px;font-size:11px;color:#080808;transform:scaleX(0.9902);">Atualizado Em: 18/11/2025</span>
<span class="t" style="left:1690px;top:1024.99px;font-size:11px;color:#080808;transform:scaleX(1.027);">Versão: 6.4.7.1</span>
<span class="t" style="left:1776px;top:1024.99px;font-size:11px;color:#353535;transform:scaleX(0.8509);">CAPS</span>
<span class="t" style="left:1810.5px;top:1024.99px;font-size:11px;color:#080808;transform:scaleX(0.8978);">NUM</span>
<span class="t" style="left:1842px;top:1024.99px;font-size:11px;color:#353535;transform:scaleX(0.8009);">SCRL</span>
<span class="t" style="left:1878px;top:1024.99px;font-size:11px;color:#353535;transform:scaleX(0.8995);">INS</span>
<svg style="left:48px;top:17.5px;" width="17" height="16" viewBox="0 0 17 16"><path d="M1 7.5L16 0.8L12.8 14.6L8.3 10.8L6.2 14.4L5.6 9.6z" fill="#4b4d52"/><path d="M5.6 9.6L16 0.8L8.3 10.8" fill="#3a3c42"/></svg>
<svg style="left:78px;top:17px;" width="16" height="16" viewBox="0 0 16 16"><path d="M1 16V7h3V3h3V1h2v2h3v4h3v9z" fill="#654f2c"/><path d="M1 16V7h3V3h3V1h2v2h3v4h3v9" fill="none" stroke="#080808" stroke-width="1.1"/><path d="M5 5h1.5v2H5zM9.500 5H11v2H9.500zM5 9h1.5v2H5zM9.500 9H11v2H9.500zM2.5 9h1v5h-1zM12.500 9h1v5h-1z" fill="#0c0c0c"/><rect x="6.500" y="11.500" width="3" height="4.500" fill="#555a60"/></svg>
<svg style="left:110px;top:17.5px;" width="13" height="16" viewBox="0 0 13 16"><rect x="0.5" y="0.5" width="8" height="12.500" fill="#50382d"/><rect x="1.6" y="1.8" width="5.800" height="3" fill="#2a3040"/><path d="M1.6 6.500h5.800M1.6 8.500h5.800M1.6 10.500h3" stroke="#38271e" stroke-width="1"/><circle cx="8.300" cy="11.300" r="3.500" fill="#2c381f" stroke="#5c130f" stroke-width="1.2"/><rect x="7" y="9.800" width="2.600" height="3" fill="#2f5023"/></svg>
<svg style="left:139px;top:17.5px;" width="15.5" height="15" viewBox="0 0 15.5 15"><rect width="15.500" height="15" fill="#58585c"/><rect x="1" y="1" width="13.500" height="13" fill="#4e4e52"/><circle cx="5.800" cy="7.500" r="4.600" fill="#5c1f18"/><path d="M5.800 7.500V2.900A4.600 4.600 0 0 1 10.400 7.500z" fill="#384455"/><rect x="10.800" y="3" width="1.500" height="9.500" fill="#384418"/><rect x="12.600" y="3" width="1.600" height="9.500" fill="#68440c"/></svg>
<svg style="left:168px;top:17px;" width="17" height="17" viewBox="0 0 17 17"><rect x="0.3" y="1.500" width="14.500" height="14" fill="#6a6252"/><rect x="0.3" y="1.500" width="14.500" height="3.800" fill="#651919"/><rect x="3" y="0" width="1.700" height="3" fill="#151515"/><rect x="10.500" y="0" width="1.700" height="3" fill="#151515"/><path d="M0.3 8.500h14.500M0.3 12h14.500M5 5.300v10M10 5.300v10" stroke="#554e42" stroke-width="0.8"/><rect x="6.300" y="8.800" width="2.600" height="2.600" fill="#222"/><circle cx="13" cy="13" r="3.800" fill="#0b5033"/><path d="M11.200 13l1.400 1.500L15 11.800" stroke="#688579" stroke-width="1.100" fill="none"/></svg>
<svg style="left:198px;top:19px;" width="17" height="13" viewBox="0 0 17 13"><path d="M16 0.700H0.700V11h8" fill="none" stroke="#4c4e52" stroke-width="1.3"/><rect x="2.500" y="6.500" width="1.800" height="3.500" fill="#232f48"/><rect x="5" y="4.500" width="1.800" height="5.500" fill="#232f48"/><rect x="7.500" y="2.500" width="1.800" height="7.500" fill="#232f48"/><path d="M9.500 4h1.500l1 4h4l0.800-3h-5.500" fill="#4c4e52"/><rect x="11.300" y="9.500" width="1.800" height="1.800" fill="#4c4e52"/><rect x="14.200" y="9.500" width="1.800" height="1.800" fill="#4c4e52"/></svg>
<svg style="left:229px;top:18.5px;" width="15" height="15" viewBox="0 0 15 15"><rect x="0.500" y="0.500" width="13.500" height="7.500" fill="#224710"/><rect x="1.800" y="1.700" width="10.900" height="5.100" fill="#2f5818" /><ellipse cx="7.300" cy="4.300" rx="2.300" ry="2.200" fill="#1a3c0b"/><path d="M6.200 8.500h2.200v2.500h2.300L7.300 14.500L3.900 11h2.300z" fill="#795c03"/></svg>
<svg style="left:267px;top:21px;" width="9" height="8" viewBox="0 0 9 8"><path d="M0.500 1h7.500" stroke="#273244" stroke-width="1"/><path d="M1 3.500L4.300 6.500L7.600 3.500" stroke="#273244" stroke-width="1.1" fill="none"/></svg>
<svg style="left:1793px;top:19.7px;" width="12" height="11" viewBox="0 0 12 11"><rect x="0.500" y="0.500" width="10.500" height="9.500" fill="none" stroke="#3a4352" stroke-width="1"/><path d="M0.500 3h10.500" stroke="#3a4352"/><path d="M3.500 6.800L5.800 4.700L8 6.800M5.800 4.700V9" stroke="#3a4352" fill="none" stroke-width="0.9"/></svg>
<div style="left:1842px;top:25px;width:10px;height:1px;background:#3a4352;"></div>
<svg style="left:1889.2px;top:19px;" width="12" height="12" viewBox="0 0 12 12"><path d="M1 1L11 11M11 1L1 11" stroke="#3a4352" stroke-width="1.100"/></svg>
<svg style="left:48px;top:102px;" width="24" height="32" viewBox="0 0 24 32"><rect x="1.500" y="5" width="21" height="25.500" rx="1.500" fill="#162c4d"/><rect x="3.500" y="7" width="17" height="21.500" fill="#4a4f58"/>
<path d="M7 2.500a5 3 0 0 1 10 0l2 2.500v2H5v-2z" fill="#2c2c2c"/><rect x="10.500" y="1.800" width="3" height="1.600" fill="#555"/>
<rect x="6.500" y="12" width="3.200" height="3.200" fill="none" stroke="#2a2a2a" stroke-width="0.800"/><path d="M12 12.500h6M12 15.500h6M11 19.500h7M11 22.500h7" stroke="#222" stroke-width="0.900"/>
<path d="M4.500 18.500l3 4.300L14.500 11.500" stroke="#500909" stroke-width="2" fill="none"/></svg>
<svg style="left:128px;top:105px;" width="28" height="28" viewBox="0 0 28 28"><rect x="6.800" y="0.800" width="14.400" height="10" fill="none" stroke="#171b1e" stroke-width="1.600"/><rect x="0" y="8.200" width="28" height="15.700" rx="2.200" fill="#171b1e"/><rect x="6.800" y="18" width="14.400" height="9.200" fill="#4f4f4f" stroke="#171b1e" stroke-width="1.600"/></svg>
<svg style="left:218px;top:105px;" width="28" height="28" viewBox="0 0 28 28"><rect x="6.800" y="0.800" width="14.400" height="10" fill="none" stroke="#171b1e" stroke-width="1.600"/><rect x="0" y="8.200" width="28" height="15.700" rx="2.200" fill="#171b1e"/><rect x="6.800" y="18" width="14.400" height="9.200" fill="#4f4f4f" stroke="#171b1e" stroke-width="1.600"/></svg>
<svg style="left:303px;top:103px;" width="32" height="32" viewBox="0 0 32 32"><g stroke="#131313" stroke-width="1.100">
<rect x="20" y="0.800" width="10.500" height="10" rx="1" fill="#513822"/><rect x="18.500" y="11" width="10.500" height="10" rx="1" fill="#513822"/><rect x="21" y="21.300" width="10.500" height="10" rx="1" fill="#513822"/>
<path d="M1 30.500v-11c0-3 2-4.500 5-4.500h7c3 0 5 1.500 5 4.500v11z" fill="#5c4d19"/>
<ellipse cx="9.500" cy="8.500" rx="5.200" ry="6" fill="#4e4038"/><path d="M3.800 8c-0.800-8 12.200-8 11.400 0c-2-3-9-3-11.400 0z" fill="#2a2a2c"/>
<rect x="6.500" y="19.500" width="7" height="11" fill="#50565e"/></g>
<path d="M23 3.500h4.500M21.500 13.800h4.500M24 24h4.500" stroke="#2a1c10" stroke-width="1.400"/></svg>
<svg style="left:359px;top:103px;" width="32" height="32" viewBox="0 0 32 32"><g stroke="#131313" stroke-width="0.900"><rect x="5" y="2" width="9.500" height="9" fill="#685212"/><rect x="16.800" y="2" width="9.500" height="9" fill="#685212"/><rect x="5" y="16.500" width="9.500" height="9" fill="#685212"/><rect x="16.800" y="16.500" width="9.500" height="9" fill="#685212"/>
<rect x="1" y="0.500" width="2.600" height="31" fill="#68300d"/><rect x="28.400" y="0.500" width="2.600" height="31" fill="#68300d"/><rect x="3.600" y="11" width="24.800" height="2.200" fill="#5c220c"/><rect x="3.600" y="25.500" width="24.800" height="2.200" fill="#5c220c"/></g>
<path d="M8.300 2h2.900v3.500H8.300zM20.100 2H23v3.500h-2.900zM8.300 16.500h2.900V20H8.300zM20.100 16.500H23V20h-2.900z" fill="#5a5f66"/></svg>
<svg style="left:437px;top:103px;" width="32" height="32" viewBox="0 0 32 32"><path d="M1 13.800l4.500-1.300L18 28.500l10.500-8.500" fill="none" stroke="#101010" stroke-width="3.200" stroke-linejoin="round"/><path d="M1 13.800l4.500-1.300L18 28.500l10.500-8.500" fill="none" stroke="#565a60" stroke-width="1.700" stroke-linejoin="round"/>
<g stroke="#111" stroke-width="1"><rect x="7.500" y="2" width="11" height="11" fill="#614a1f" transform="rotate(-38 13 7.500)"/><rect x="16.500" y="8.500" width="13.500" height="12.500" fill="#614a1f" transform="rotate(-38 23 15)"/>
<rect x="9.500" y="3.500" width="7" height="4.500" fill="#5a5c60" stroke-width="0.700" transform="rotate(-38 13 7.500)"/><rect x="18.500" y="10.500" width="9" height="5" fill="#5a5c60" stroke-width="0.700" transform="rotate(-38 23 15)"/>
<circle cx="16.500" cy="28.200" r="3.500" fill="#112a3c"/></g><circle cx="16.500" cy="28.200" r="1.200" fill="#565a60"/></svg>
<svg style="left:526px;top:106px;" width="32" height="26" viewBox="0 0 32 26"><rect x="10" y="1" width="18.500" height="12" rx="1" fill="#533c1b"/><rect x="0.500" y="9" width="15" height="15.500" rx="1" fill="#503919"/><rect x="15.500" y="12" width="16" height="12.500" rx="1" fill="#533c1b"/>
<rect x="17.500" y="1" width="3.600" height="5.500" fill="#5c2633"/><rect x="6.500" y="9" width="3.600" height="6" fill="#5c2633"/><rect x="21" y="12" width="3.600" height="5" fill="#5c2633"/><rect x="11" y="20.500" width="2.500" height="1.500" fill="#5c2633"/><rect x="26" y="20.500" width="3" height="1.500" fill="#5c2633"/></svg>
<svg style="left:613px;top:104px;" width="28" height="29" viewBox="0 0 28 29"><g stroke="#0a0a0a" stroke-width="1.500" stroke-linejoin="round"><path d="M1.500 7.500L13 2L25 7.500V21L13 27L1.500 21z" fill="#452600"/><path d="M1.500 7.500L13 2L25 7.500L13 13.500z" fill="#61480b"/><path d="M13 13.500V27" fill="none"/><path d="M7 4.800L19 10.600" fill="none"/></g>
<circle cx="20.500" cy="21" r="6.300" fill="#085032" stroke="#0a0a0a" stroke-width="1.300"/><path d="M17.500 21l2.200 2.200L23.800 19" stroke="#0a0a0a" stroke-width="1.500" fill="none"/></svg>
<svg style="left:721px;top:102px;" width="32" height="33" viewBox="0 0 32 33"><circle cx="17" cy="18" r="14.500" fill="#51575d"/><path d="M5 30a14.500 14.500 0 0 0 24 0z" fill="#5c500f"/>
<rect x="3" y="3.500" width="17" height="24" rx="1" fill="#5a5c60" stroke="#501f13" stroke-width="1.300"/><rect x="7.500" y="1" width="8" height="4.500" rx="1" fill="#68500f"/>
<path d="M9 9h8M9 12.500h8M9 16h8M9 19.500h8M9 23h8" stroke="#1f4419" stroke-width="1.100"/><path d="M5.500 9h2M5.500 12.500h2M5.500 16h2M5.500 19.500h2M5.500 23h2" stroke="#133813" stroke-width="1.600"/>
<rect x="19" y="11.500" width="8" height="8" fill="#68500f"/><rect x="17" y="19" width="11" height="11" fill="#503219"/><rect x="21.500" y="11.500" width="2.500" height="2.500" fill="#681f33"/><rect x="21" y="19" width="3" height="2.500" fill="#681f33"/><path d="M18.500 26h4M18.500 28h6" stroke="#685c50" stroke-width="0.900"/></svg>
<svg style="left:816px;top:103px;" width="32" height="32" viewBox="0 0 32 32"><g stroke="#131313" stroke-width="1.200"><rect x="13" y="3" width="17.500" height="27.500" rx="2" fill="#4a4a4c"/><rect x="16" y="1.500" width="9" height="3" rx="1.500" fill="#385019" stroke-width="0.800"/>
<rect x="0.800" y="0.800" width="12" height="13" rx="1" fill="#452f1c"/><rect x="0.800" y="17.800" width="12" height="13" rx="1" fill="#452f1c"/></g>
<path d="M3.500 3.200h6.500M3.500 20.200h6.500" stroke="#2a1a0c" stroke-width="1.600"/>
<g fill="#2d2d2d"><rect x="22.500" y="7" width="6" height="5.500"/><rect x="22.500" y="14.500" width="6" height="5.500"/><rect x="22.500" y="22" width="6" height="5.500"/></g>
<g fill="#501818"><rect x="15" y="7.500" width="4.500" height="4.500"/><rect x="15" y="15" width="4.500" height="4.500"/><rect x="15" y="22.500" width="4.500" height="4.500"/></g>
<path d="M15.500 9.500l1.600 1.800L20.500 7M15.500 17l1.600 1.800l3.400-4.300M15.500 24.500l1.600 1.800l3.400-4.300" stroke="#111" stroke-width="1.100" fill="none"/></svg>
<svg style="left:915px;top:103px;" width="32" height="32" viewBox="0 0 32 32"><circle cx="16" cy="16" r="16" fill="#171b28"/><path d="M0 13h32M0 24h20M6.500 3v26M23 2v28" stroke="#22283a" stroke-width="1.600"/>
<g fill="#50330c"><rect x="8" y="3" width="6" height="4.200"/><rect x="15.500" y="3" width="6" height="4.200"/><rect x="8" y="12.500" width="6" height="4.200"/><rect x="15.500" y="12.500" width="6" height="4.200"/><rect x="27" y="12.500" width="5" height="4.200"/></g>
<g fill="#68501b"><rect x="9" y="3.800" width="2.500" height="1"/><rect x="16.500" y="3.800" width="2.500" height="1"/><rect x="9" y="13.300" width="2.500" height="1"/><rect x="16.500" y="13.300" width="2.500" height="1"/><rect x="27.500" y="13.300" width="2.500" height="1"/></g>
<rect x="2.500" y="18.500" width="13.500" height="11.500" fill="#533810"/><rect x="2.500" y="18.500" width="6" height="11.500" fill="#5c3f12"/><rect x="3" y="20.500" width="6.500" height="2.200" fill="#685c1f"/></svg>
<svg style="left:993px;top:102px;" width="28" height="28" viewBox="0 0 28 28"><rect x="9" y="7.200" width="18" height="3.200" fill="#2c2c2c"/><rect x="7" y="11.500" width="20" height="15" fill="#2c2c2c"/><rect x="20" y="14" width="5" height="2.600" fill="#555"/>
<g stroke="#68440d" stroke-width="0.900"><path d="M6 1v10M1 6h10M2.500 2.500l7 7M9.500 2.500l-7 7"/></g><circle cx="6" cy="6" r="2.200" fill="#4f4f4f" stroke="#68440d" stroke-width="0.800"/></svg>
<svg style="left:8px;top:215.5px;" width="18" height="13" viewBox="0 0 18 13"><rect x="0.500" y="0.500" width="15.500" height="11" rx="1.500" fill="#4c4d50" stroke="#44464a" stroke-width="0.800"/><path d="M0.700 1v10" stroke="#1c2438" stroke-width="1"/><circle cx="5.300" cy="4" r="1.800" fill="#3a2c1c"/><path d="M2.500 10c0-3.500 5.600-3.500 5.600 0z" fill="#161c2e"/><path d="M10 6.200h4" stroke="#1f2c44" stroke-width="1.100"/></svg>
<svg style="left:83px;top:214px;" width="15" height="13" viewBox="0 0 15 13"><rect x="0.500" y="0.500" width="14" height="12" rx="1" fill="#505050" stroke="#565656" stroke-width="0.700"/><path d="M2.500 2.500h3.800v7l-1.900-1.500l-1.900 1.500zM8.500 2.500h3.800v7l-1.900-1.500l-1.900 1.500z" fill="#1c1c1c"/></svg>
<svg style="left:37px;top:964px;" width="28" height="28" viewBox="0 0 28 28"><defs><linearGradient id="gb" x1="0" y1="0" x2="0" y2="1"><stop offset="0" stop-color="#44525c"/><stop offset="0.55" stop-color="#26405a"/><stop offset="1" stop-color="#1a2e46"/></linearGradient></defs>
<circle cx="14" cy="14" r="13.200" fill="url(#gb)" stroke="#15273c" stroke-width="0.800"/><path d="M14 7.800v12.400M7.800 14h12.400" stroke="#13233a" stroke-width="5.600" stroke-linecap="round"/><path d="M14 7.800v12.400M7.800 14h12.400" stroke="#4d4d4d" stroke-width="3.600" stroke-linecap="round"/></svg>
<svg style="left:173px;top:964px;" width="32" height="29" viewBox="0 0 32 29"><rect x="0.500" y="0.500" width="23" height="19" fill="#404040" stroke="#4a4a4a"/><path d="M0.500 5h23M0.500 10h23M0.500 15h23M6.500 0.500v19M12.500 0.500v19M18.500 0.500v19" stroke="#4c4c4c" stroke-width="1"/><path d="M30 6.500L13 24.500l-4 3.500l2-5z" fill="#2f2f2f" stroke="#444" stroke-width="0.800"/></svg>
<svg style="left:308px;top:962px;" width="31" height="30" viewBox="0 0 31 30"><rect x="7.500" y="1" width="16" height="12" fill="#2c3542" stroke="#384252" stroke-width="1"/><rect x="0.800" y="10.500" width="29.400" height="14" rx="3" fill="#2b3848" stroke="#3c4858" stroke-width="1"/><rect x="2.500" y="12.500" width="26" height="3" fill="#3d4a5c"/><rect x="6.500" y="20.500" width="18" height="8.500" fill="#21354d" stroke="#404c5c" stroke-width="1"/><path d="M6 18.500h19" stroke="#1a2230" stroke-width="1.600"/></svg>
<svg style="left:452px;top:961px;" width="26" height="32" viewBox="0 0 26 32"><path d="M1 1h14l7 7v19H1z" fill="#2f3948" stroke="#3c485c" stroke-width="1"/><path d="M15 1v7h7" fill="#3f4c5e"/><path d="M4 7h8M4 10h14M4 13h14M4 16h14M4 19h10M4 22h8" stroke="#1c283b" stroke-width="1.300" stroke-dasharray="1.200 0.800"/>
<circle cx="18" cy="24.500" r="5.200" fill="none" stroke="#225016" stroke-width="2.800"/><path d="M14 18.500l5 0l-2 4zM22 30.500l-5 0l2-4z" fill="#225016"/></svg>
<svg style="left:591px;top:963px;" width="30" height="30" viewBox="0 0 30 30"><circle cx="16" cy="15.500" r="12.500" fill="#48494b" stroke="#1d3c5f" stroke-width="3"/><circle cx="16" cy="15.500" r="10.500" fill="none" stroke="#2c3845" stroke-width="1"/><path d="M1 3.500l1.500 9l7-4.500z" fill="#1f446d"/><path d="M16 15.500h8.500" stroke="#681f13" stroke-width="1.200"/><path d="M16 15.500L11 22" stroke="#222" stroke-width="1.300"/><circle cx="16" cy="15.500" r="1.300" fill="#222"/></svg>
<svg style="left:735px;top:961px;" width="31" height="32" viewBox="0 0 31 32"><rect x="1" y="1" width="24" height="20" fill="#47484a" stroke="#55565a" stroke-width="1"/><path d="M1 6h24M1 11h24M1 16h24M9 1v20M17 1v20" stroke="#5a5b5f" stroke-width="1"/><rect x="1.500" y="1.500" width="7" height="4" fill="#68501f"/><rect x="1.500" y="11.500" width="7" height="4" fill="#68501f"/>
<rect x="12.500" y="14.500" width="17" height="17" fill="#2c2f36" stroke="#5a5e68" stroke-width="1.300"/><rect x="17" y="19" width="8" height="8" fill="none" stroke="#6a6e78" stroke-width="1.300"/><rect x="20" y="22" width="5.500" height="5.500" fill="#1a1c22" stroke="#6a6e78" stroke-width="1"/></svg>
<div style="left:519px;top:222px;width:882px;height:594px;background:#3a3936;border:1px solid #55544f;border-radius:7px 7px 0 0;"></div>
<div style="left:520px;top:223px;width:880px;height:27px;background:linear-gradient(#8a8a84 0px,#6c6c67 1.2px,#63635e 8px,#4a4945 8.6px,#403f3c 16px,#3c3b38 26px);border-radius:6px 6px 0 0;"></div>
<div style="left:525px;top:250px;width:870px;height:560px;background:#efebe7;border-right:1px solid #fdfcfa;border-bottom:1px solid #fdfcfa;"></div>
<span class="t" style="left:525.5px;top:229.84px;font-size:12px;color:#fff;transform:scaleX(0.9722);">Cadastro de Produtos</span>
<svg style="left:1379px;top:229px;" width="14" height="14" viewBox="0 0 14 14"><path d="M3 3L11 11M11 3L3 11" stroke="#f4f4f4" stroke-width="2.1"/></svg>
<div style="left:536px;top:270px;width:629px;height:47px;border:1px solid #c6bebb;border-radius:5px;box-shadow:inset 0 0 0 1px rgba(255,255,255,.55);"></div>
<div style="left:540px;top:264px;width:93px;height:12px;background:#efebe7;"></div>
<span class="t" style="left:542.3px;top:263.09px;font-size:11px;color:#000;transform:scaleX(0.9419);">Selecione empresa</span>
<div style="left:548px;top:285px;width:603px;height:21px;background:#fff;border:1px solid #565656;"></div>
<span class="t" style="left:550.4px;top:288.84px;font-size:12px;color:#000;font-weight:bold;transform:scaleX(0.9544);">PARTNER UNION</span>
<span class="t" style="left:935px;top:270.69px;font-size:11px;color:#000;transform:scaleX(0.9877);">Este produto foi cadastrado em</span>
<span class="t" style="left:1095.7px;top:270.69px;font-size:11px;color:#000;transform:scaleX(0.9952);">17/10/2024</span>
<svg style="left:1188px;top:272px;" width="34" height="33" viewBox="0 0 34 33"><path d="M3.400 9.800L7.200 4.800h19.800l3.400 5z" fill="#c77800"/><path d="M6.800 9.800L10.500 1.800L17.200 6L19.200 2.200L27.400 9.800z" fill="#b3e5fc"/><path d="M15 5L19.200 2.200L24.200 4.600L27.400 9.800H20z" fill="#4fc3f7"/>
<rect x="3.400" y="9.600" width="27" height="21" rx="1.600" fill="#ff9800"/><rect x="13.500" y="12.800" width="7.600" height="1.900" rx="0.900" fill="#8a4f00"/></svg>
<span class="t" style="left:1235px;top:277.84px;font-size:27px;color:#8e8e8e;font-weight:bold;transform:scaleX(0.9873);">Produtos</span>
<span class="t" style="left:549.3px;top:335.99px;font-size:11px;color:#000;transform:scaleX(0.9381);">Código</span>
<span class="t" style="left:588.3px;top:336.69px;font-size:11px;color:#000;transform:scaleX(0.9344);">Descrição</span>
<div style="left:547px;top:352px;width:39px;height:21px;background:#fff;border:1px solid #b9b5b0;"></div>
<span class="t" style="left:569.84px;top:356.14px;font-size:12px;color:#000;">19</span>
<div style="left:589px;top:352px;width:429px;height:21px;background:#fff;border:1px solid #565656;"></div>
<span class="t" style="left:591.6px;top:356.14px;font-size:12px;color:#000;transform:scaleX(0.9056);">BEBIDA LÃCTEA PIRAKIDS CHOCOLATE 200ML</span>
<span class="t" style="left:1024.7px;top:338.89px;font-size:11px;color:#000;transform:scaleX(0.9532);">Código de Barras</span>
<div style="left:1024px;top:352px;width:104px;height:21px;background:#fff;border:1px solid #565656;"></div>
<span class="t" style="left:1027px;top:356.14px;font-size:12px;color:#000;transform:scaleX(0.8874);">7898215151807</span>
<div style="left:1131px;top:354px;width:18px;height:18px;background:#fff;border:1px solid #f0906a;border-radius:3px;box-shadow:0 0 0 1px #c9a090, inset 0 0 0 1px #f9c9b0;"></div>
<svg style="left:1133px;top:356.15px;" width="14" height="14" viewBox="0 0 14 14"><path d="M2.500 12.300h7" stroke="#d0d0d0" stroke-width="0.800"/><circle cx="5.400" cy="5" r="3.500" fill="#f7cf8e" stroke="#dcdcdc" stroke-width="1.100"/><circle cx="5.400" cy="5" r="1.900" fill="#f2a93a"/><path d="M8 7.700L11.600 11.500" stroke="#3b8bc0" stroke-width="2" stroke-linecap="round"/></svg>
<span class="t" style="left:1157.6px;top:338.89px;font-size:11px;color:#000;transform:scaleX(0.9742);">Cód. Barras (Caixa)</span>
<div style="left:1157px;top:352px;width:120px;height:21px;background:#fff;border:1px solid #565656;"></div>
<span class="t" style="left:1282.4px;top:338.89px;font-size:11px;color:#000;transform:scaleX(0.9699);">Referência</span>
<div style="left:1283px;top:352px;width:93px;height:21px;background:#fff;border:1px solid #565656;"></div>
<span class="t" style="left:1286px;top:356.14px;font-size:12px;color:#000;transform:scaleX(0.98);">19</span>
<span class="t" style="left:546.2px;top:380.69px;font-size:11px;color:#000;transform:scaleX(0.9605);">Tipo de Produto</span>
<div style="left:548px;top:396px;width:268px;height:20px;background:#fff;border:1px solid #b9b5b0;"></div>
<div style="left:799px;top:396px;width:16px;height:19px;background:#f4f2f0;border-left:1px solid #dcd9d5;"></div>
<svg style="left:803px;top:399.55px;" width="8" height="12" viewBox="0 0 8 12"><path d="M1 4.8L4 1.6L7 4.8z M1 7.2L4 10.4L7 7.2z" fill="#555"/></svg>
<span class="t" style="left:552px;top:399.34px;font-size:12px;color:#000;transform:scaleX(0.9235);">00-MERCADORIA PARA REVENDA</span>
<span class="t" style="left:822.3px;top:381.49px;font-size:11px;color:#000;transform:scaleX(0.968);">F2 | Marca</span>
<div style="left:823px;top:396px;width:207px;height:21px;background:#fff;border:1px solid #565656;"></div>
<div style="left:1012px;top:397px;width:16px;height:18px;background:#f4f2f0;border-left:1px solid #dcd9d5;"></div>
<svg style="left:1016.5px;top:400.2px;" width="8" height="12" viewBox="0 0 8 12"><path d="M1 4.8L4 1.6L7 4.8z M1 7.2L4 10.4L7 7.2z" fill="#555"/></svg>
<span class="t" style="left:827px;top:400.14px;font-size:12px;color:#000;transform:scaleX(0.8385);">DIVERSOS</span>
<div style="left:1035px;top:396px;width:18px;height:21px;background:linear-gradient(#fdfdfc,#eeece9);border:1px solid #b9b7b4;border-radius:4px;"></div>
<svg style="left:1037px;top:399.5px;" width="14" height="14" viewBox="0 0 14 14"><path d="M2.500 12.300h7" stroke="#d0d0d0" stroke-width="0.800"/><circle cx="5.400" cy="5" r="3.500" fill="#f7cf8e" stroke="#dcdcdc" stroke-width="1.100"/><circle cx="5.400" cy="5" r="1.900" fill="#f2a93a"/><path d="M8 7.700L11.600 11.500" stroke="#3b8bc0" stroke-width="2" stroke-linecap="round"/></svg>
<span class="t" style="left:1055.3px;top:382.69px;font-size:11px;color:#000;transform:scaleX(0.9735);">F2 | Grupo</span>
<div style="left:1057px;top:396px;width:198px;height:21px;background:#fff;border:1px solid #565656;"></div>
<div style="left:1237px;top:397px;width:16px;height:18px;background:#f4f2f0;border-left:1px solid #dcd9d5;"></div>
<svg style="left:1241.3px;top:400.2px;" width="8" height="12" viewBox="0 0 8 12"><path d="M1 4.8L4 1.6L7 4.8z M1 7.2L4 10.4L7 7.2z" fill="#555"/></svg>
<span class="t" style="left:1061.4px;top:400.14px;font-size:12px;color:#000;transform:scaleX(0.832);">DIVERSOS</span>
<div style="left:1258px;top:396px;width:19px;height:21px;background:linear-gradient(#fdfdfc,#eeece9);border:1px solid #b9b7b4;border-radius:4px;"></div>
<svg style="left:1260.5px;top:399.5px;" width="14" height="14" viewBox="0 0 14 14"><path d="M2.500 12.300h7" stroke="#d0d0d0" stroke-width="0.800"/><circle cx="5.400" cy="5" r="3.500" fill="#f7cf8e" stroke="#dcdcdc" stroke-width="1.100"/><circle cx="5.400" cy="5" r="1.900" fill="#f2a93a"/><path d="M8 7.700L11.600 11.500" stroke="#3b8bc0" stroke-width="2" stroke-linecap="round"/></svg>
<span class="t" style="left:1282.4px;top:380.69px;font-size:11px;color:#000;transform:scaleX(0.965);">F2 | Unidade</span>
<div style="left:1283px;top:396px;width:69px;height:21px;background:#fff;border:1px solid #565656;"></div>
<div style="left:1334px;top:397px;width:16px;height:18px;background:#f4f2f0;border-left:1px solid #dcd9d5;"></div>
<svg style="left:1338.3px;top:400.2px;" width="8" height="12" viewBox="0 0 8 12"><path d="M1 4.8L4 1.6L7 4.8z M1 7.2L4 10.4L7 7.2z" fill="#555"/></svg>
<span class="t" style="left:1287.4px;top:400.14px;font-size:12px;color:#000;transform:scaleX(0.9168);">UN</span>
<div style="left:1355px;top:396px;width:20px;height:21px;background:linear-gradient(#fdfdfc,#eeece9);border:1px solid #b9b7b4;border-radius:4px;"></div>
<svg style="left:1358px;top:399.5px;" width="14" height="14" viewBox="0 0 14 14"><path d="M2.500 12.300h7" stroke="#d0d0d0" stroke-width="0.800"/><circle cx="5.400" cy="5" r="3.500" fill="#f7cf8e" stroke="#dcdcdc" stroke-width="1.100"/><circle cx="5.400" cy="5" r="1.900" fill="#f2a93a"/><path d="M8 7.700L11.600 11.500" stroke="#3b8bc0" stroke-width="2" stroke-linecap="round"/></svg>
<span class="t" style="left:546.2px;top:426.59px;font-size:11px;color:#000;transform:scaleX(0.9419);">Preço Compra</span>
<span class="t" style="left:624.5px;top:426.59px;font-size:11px;color:#000;transform:scaleX(0.9707);">% Custos</span>
<span class="t" style="left:673.3px;top:426.59px;font-size:11px;color:#000;transform:scaleX(0.9532);">Preço Custo</span>
<span class="t" style="left:755.5px;top:426.59px;font-size:11px;color:#000;transform:scaleX(0.944);">% Lucro</span>
<span class="t" style="left:818px;top:426.59px;font-size:11px;color:#000;transform:scaleX(0.9524);">Preço Venda</span>
<span class="t" style="left:894.5px;top:426.59px;font-size:11px;color:#000;transform:scaleX(1.0056);">Qtd.Atacado</span>
<span class="t" style="left:958.3px;top:426.59px;font-size:11px;color:#000;">Pr.Atacado</span>
<span class="t" style="left:1037.8px;top:426.59px;font-size:11px;color:#000;transform:scaleX(0.9506);">Comissão %</span>
<span class="t" style="left:1102.7px;top:426.59px;font-size:11px;color:#000;transform:scaleX(0.9829);">Desconto %</span>
<span class="t" style="left:1222.5px;top:424.99px;font-size:11px;color:#000;transform:scaleX(0.9209);">Localização</span>
<div style="left:548px;top:440px;width:75px;height:21px;background:#fff;border:1px solid #b9b5b0;"></div>
<span class="t" style="left:598.84px;top:443.84px;font-size:12px;color:#000;transform:scaleX(0.91);">0,98</span>
<div style="left:626px;top:440px;width:46px;height:21px;background:#fff;border:1px solid #b9b5b0;"></div>
<div style="left:675px;top:440px;width:78px;height:21px;background:#fff;border:1px solid #b9b5b0;"></div>
<div style="left:756px;top:440px;width:61px;height:21px;background:#fff;border:1px solid #b9b5b0;"></div>
<span class="t" style="left:786.47px;top:443.84px;font-size:12px;color:#000;transform:scaleX(0.91);">34,67</span>
<div style="left:820px;top:440px;width:74px;height:21px;background:#fff;border:1px solid #b9b5b0;"></div>
<span class="t" style="left:869.54px;top:443.84px;font-size:12px;color:#000;transform:scaleX(0.91);">1,50</span>
<div style="left:896px;top:440px;width:61px;height:21px;background:#fff;border:1px solid #b9b5b0;"></div>
<span class="t" style="left:948.11px;top:443.84px;font-size:12px;color:#000;transform:scaleX(0.91);">0</span>
<div style="left:958px;top:440px;width:80px;height:21px;background:#fff;border:1px solid #b9b5b0;"></div>
<span class="t" style="left:1013.74px;top:443.84px;font-size:12px;color:#000;transform:scaleX(0.91);">0,00</span>
<div style="left:1040px;top:440px;width:62px;height:21px;background:#fff;border:1px solid #b9b5b0;"></div>
<span class="t" style="left:1077.84px;top:443.84px;font-size:12px;color:#000;transform:scaleX(0.91);">0,00</span>
<div style="left:1103px;top:440px;width:59px;height:21px;background:#fff;border:1px solid #b9b5b0;"></div>
<span class="t" style="left:1137.74px;top:443.84px;font-size:12px;color:#000;transform:scaleX(0.91);">0,00</span>
<div style="left:1163px;top:440px;width:213px;height:21px;background:#fff;border:1px solid #565656;"></div>
<span class="t" style="left:547.6px;top:467.39px;font-size:11px;color:#000;transform:scaleX(0.9235);">Estoque Minímo</span>
<span class="t" style="left:628.4px;top:467.39px;font-size:11px;color:#000;transform:scaleX(0.9658);">Estoque Inicial</span>
<span class="t" style="left:710.3px;top:467.39px;font-size:11px;color:#000;transform:scaleX(0.9854);">Estoque Atual</span>
<span class="t" style="left:794.5px;top:467.39px;font-size:11px;color:#000;transform:scaleX(0.9054);">Peso (KG)</span>
<span class="t" style="left:877.2px;top:467.39px;font-size:11px;color:#000;transform:scaleX(0.8898);">NCM</span>
<span class="t" style="left:1297.7px;top:467.39px;font-size:11px;color:#000;transform:scaleX(0.8281);">CEST</span>
<div style="left:547px;top:480px;width:80px;height:21px;background:#fff;border:1px solid #b9b5b0;"></div>
<span class="t" style="left:618.01px;top:484.14px;font-size:12px;color:#000;transform:scaleX(0.91);">0</span>
<div style="left:629px;top:480px;width:80px;height:21px;background:#fff;border:1px solid #b9b5b0;"></div>
<div style="left:711px;top:480px;width:80px;height:21px;background:#fff;border:1px solid #b9b5b0;"></div>
<span class="t" style="left:782.31px;top:484.14px;font-size:12px;color:#000;transform:scaleX(0.91);">0</span>
<div style="left:795px;top:480px;width:80px;height:21px;background:#fff;border:1px solid #b9b5b0;"></div>
<div style="left:877px;top:480px;width:64px;height:21px;background:#fff;border:1px solid #565656;"></div>
<span class="t" style="left:879.4px;top:484.14px;font-size:12px;color:#000;transform:scaleX(0.8878);">22029000</span>
<div style="left:944px;top:480px;width:350px;height:21px;background:#fff;border:1px solid #565656;"></div>
<div style="left:1277px;top:482px;width:16px;height:17px;background:#f4f2f0;border-left:1px solid #dcd9d5;"></div>
<svg style="left:1280.8px;top:484.4px;" width="8" height="12" viewBox="0 0 8 12"><path d="M1 4.8L4 1.6L7 4.8z M1 7.2L4 10.4L7 7.2z" fill="#555"/></svg>
<div style="left:1300px;top:482px;width:78px;height:20px;background:#fff;border:1px solid #565656;"></div>
<span class="t" style="left:1303.3px;top:485.14px;font-size:12px;color:#000;transform:scaleX(0.8816);">1711500</span>
<div style="left:604px;top:509px;width:57px;height:18px;background:linear-gradient(#dedad6,#d3cfcb);border:1px solid #bcb8b3;border-radius:4px 4px 0 0;"></div>
<span class="t" style="left:608px;top:511.99px;font-size:11px;color:#3e3e44;transform:scaleX(0.9453);">Promoção</span>
<div style="left:662px;top:509px;width:58px;height:18px;background:linear-gradient(#dedad6,#d3cfcb);border:1px solid #bcb8b3;border-radius:4px 4px 0 0;"></div>
<span class="t" style="left:667.7px;top:511.99px;font-size:11px;color:#3e3e44;transform:scaleX(0.9394);">Adicionais</span>
<div style="left:722px;top:509px;width:47px;height:18px;background:linear-gradient(#dedad6,#d3cfcb);border:1px solid #bcb8b3;border-radius:4px 4px 0 0;"></div>
<span class="t" style="left:726.4px;top:511.99px;font-size:11px;color:#3e3e44;transform:scaleX(0.9279);">Balança</span>
<div style="left:771px;top:509px;width:68px;height:18px;background:linear-gradient(#dedad6,#d3cfcb);border:1px solid #bcb8b3;border-radius:4px 4px 0 0;"></div>
<span class="t" style="left:775.6px;top:511.99px;font-size:11px;color:#3e3e44;transform:scaleX(0.9598);">Combustivel</span>
<div style="left:841px;top:509px;width:80px;height:18px;background:linear-gradient(#dedad6,#d3cfcb);border:1px solid #bcb8b3;border-radius:4px 4px 0 0;"></div>
<span class="t" style="left:845.4px;top:511.99px;font-size:11px;color:#3e3e44;transform:scaleX(0.9342);">Ultimos Preços</span>
<div style="left:545px;top:527px;width:556px;height:200px;border:1px solid #c5c1bc;"></div>
<div style="left:547px;top:507px;width:56px;height:21px;background:#efebe7;border:1px solid #c5c1bc;border-radius:4px 4px 0 0;border-bottom:none;"></div>
<span class="t" style="left:552.8px;top:511.69px;font-size:11px;color:#000;transform:scaleX(0.9767);">Impostos</span>
<div style="left:553px;top:542px;width:127px;height:165px;border:1px solid #c6bebb;border-radius:5px;box-shadow:inset 0 0 0 1px rgba(255,255,255,.55);"></div>
<div style="left:558px;top:537px;width:67px;height:11px;background:#efebe7;"></div>
<span class="t" style="left:559.6px;top:535.89px;font-size:11px;color:#000;transform:scaleX(0.9813);">ICMS Interno</span>
<span class="t" style="left:567.9px;top:564.39px;font-size:11px;color:#000;transform:scaleX(0.8638);">CFOP</span>
<div style="left:600px;top:559px;width:36px;height:21px;background:#fff;border:1px solid #565656;"></div>
<span class="t" style="left:602.6px;top:562.84px;font-size:12px;color:#000;transform:scaleX(0.8613);">5102</span>
<span class="t" style="left:561.7px;top:591.49px;font-size:11px;color:#000;transform:scaleX(0.9373);">Origem</span>
<div style="left:600px;top:586px;width:36px;height:21px;background:#fff;border:1px solid #b9b5b0;"></div>
<span class="t" style="left:574.9px;top:620.59px;font-size:11px;color:#000;transform:scaleX(0.8409);">CST</span>
<div style="left:600px;top:615px;width:36px;height:21px;background:#fff;border:1px solid #565656;"></div>
<span class="t" style="left:602.6px;top:618.84px;font-size:12px;color:#000;transform:scaleX(0.8437);">041</span>
<div style="left:641px;top:615px;width:23px;height:22px;background:linear-gradient(#fdfdfc,#eeece9);border:1px solid #b9b7b4;border-radius:4px;"></div>
<svg style="left:645.5px;top:619px;" width="14" height="14" viewBox="0 0 14 14"><path d="M2.500 12.300h7" stroke="#d0d0d0" stroke-width="0.800"/><circle cx="5.400" cy="5" r="3.500" fill="#f7cf8e" stroke="#dcdcdc" stroke-width="1.100"/><circle cx="5.400" cy="5" r="1.900" fill="#f2a93a"/><path d="M8 7.700L11.600 11.500" stroke="#3b8bc0" stroke-width="2" stroke-linecap="round"/></svg>
<span class="t" style="left:559.6px;top:649.19px;font-size:11px;color:#000;transform:scaleX(0.8639);">CSOSN</span>
<div style="left:600px;top:645px;width:59px;height:21px;background:#fff;border:1px solid #f4f2ef;"></div>
<div style="left:642px;top:645px;width:18px;height:21px;background:#f1efed;border-left:1px solid #cfccc8;"></div>
<svg style="left:647.5px;top:649.5px;" width="8" height="12" viewBox="0 0 8 12"><path d="M1 4.800L4 1.600L7 4.800z M1 7.200L4 10.400L7 7.200z" fill="#5a5a5a"/></svg>
<span class="t" style="left:603.5px;top:649.44px;font-size:12px;color:#000;transform:scaleX(0.8437);">102</span>
<span class="t" style="left:559.6px;top:679.09px;font-size:11px;color:#000;transform:scaleX(0.9954);">Alíq. %</span>
<div style="left:600px;top:674px;width:60px;height:21px;background:#fff;border:1px solid #b9b5b0;"></div>
<span class="t" style="left:635.94px;top:678.14px;font-size:12px;color:#000;transform:scaleX(0.91);">0,00</span>
<div style="left:688px;top:542px;width:104px;height:133px;border:1px solid #c6bebb;border-radius:5px;box-shadow:inset 0 0 0 1px rgba(255,255,255,.55);"></div>
<div style="left:692px;top:537px;width:69px;height:11px;background:#efebe7;"></div>
<span class="t" style="left:693.9px;top:535.89px;font-size:11px;color:#000;transform:scaleX(0.9552);">ICMS Externo</span>
<span class="t" style="left:696.3px;top:564.39px;font-size:11px;color:#000;transform:scaleX(0.8736);">CFOP</span>
<div style="left:727px;top:559px;width:35px;height:21px;background:#fff;border:1px solid #b9b5b0;"></div>
<span class="t" style="left:735.3px;top:562.84px;font-size:12px;color:#000;transform:scaleX(0.8988);">6102</span>
<span class="t" style="left:704.6px;top:591.49px;font-size:11px;color:#000;transform:scaleX(0.8364);">CST</span>
<div style="left:727px;top:586px;width:35px;height:21px;background:#fff;border:1px solid #565656;"></div>
<span class="t" style="left:729.5px;top:590.34px;font-size:12px;color:#000;transform:scaleX(0.8237);">041</span>
<div style="left:764px;top:586px;width:23px;height:22px;background:linear-gradient(#fdfdfc,#eeece9);border:1px solid #b9b7b4;border-radius:4px;"></div>
<svg style="left:768.5px;top:590px;" width="14" height="14" viewBox="0 0 14 14"><path d="M2.500 12.300h7" stroke="#d0d0d0" stroke-width="0.800"/><circle cx="5.400" cy="5" r="3.500" fill="#f7cf8e" stroke="#dcdcdc" stroke-width="1.100"/><circle cx="5.400" cy="5" r="1.900" fill="#f2a93a"/><path d="M8 7.700L11.600 11.500" stroke="#3b8bc0" stroke-width="2" stroke-linecap="round"/></svg>
<span class="t" style="left:689.6px;top:620.59px;font-size:11px;color:#000;transform:scaleX(0.8639);">CSOSN</span>
<div style="left:727px;top:615px;width:60px;height:21px;background:#fff;border:1px solid #f4f2ef;"></div>
<div style="left:770px;top:615px;width:16px;height:21px;background:#f1efed;border-left:1px solid #cfccc8;"></div>
<svg style="left:774.5px;top:619.5px;" width="8" height="12" viewBox="0 0 8 12"><path d="M1 4.800L4 1.600L7 4.800z M1 7.200L4 10.400L7 7.200z" fill="#5a5a5a"/></svg>
<span class="t" style="left:730px;top:619.14px;font-size:12px;color:#000;transform:scaleX(0.8786);">102</span>
<span class="t" style="left:689.6px;top:649.19px;font-size:11px;color:#000;transform:scaleX(0.9696);">Alíq. %</span>
<div style="left:727px;top:644px;width:60px;height:21px;background:#fff;border:1px solid #b9b5b0;"></div>
<span class="t" style="left:778.11px;top:648.14px;font-size:12px;color:#000;transform:scaleX(0.91);">0</span>
<div style="left:798px;top:542px;width:134px;height:133px;border:1px solid #c6bebb;border-radius:5px;box-shadow:inset 0 0 0 1px rgba(255,255,255,.55);"></div>
<div style="left:802px;top:537px;width:62px;height:11px;background:#efebe7;"></div>
<span class="t" style="left:804.5px;top:535.89px;font-size:11px;color:#000;transform:scaleX(0.9271);">PIS/COFINS</span>
<span class="t" style="left:812.5px;top:564.39px;font-size:11px;color:#000;transform:scaleX(0.9386);">CST Entrada</span>
<div style="left:883px;top:559px;width:44px;height:21px;background:#fff;border:1px solid #f4f2ef;"></div>
<div style="left:909px;top:559px;width:17px;height:21px;background:#f1efed;border-left:1px solid #cfccc8;"></div>
<svg style="left:914.3px;top:563.5px;" width="8" height="12" viewBox="0 0 8 12"><path d="M1 4.800L4 1.600L7 4.800z M1 7.200L4 10.400L7 7.200z" fill="#5a5a5a"/></svg>
<span class="t" style="left:886px;top:563.14px;font-size:12px;color:#000;transform:scaleX(0.8683);">07</span>
<span class="t" style="left:824.5px;top:591.49px;font-size:11px;color:#000;transform:scaleX(0.886);">CST Saída</span>
<div style="left:883px;top:586px;width:44px;height:21px;background:#fff;border:1px solid #f4f2ef;"></div>
<div style="left:909px;top:586px;width:17px;height:21px;background:#f1efed;border-left:1px solid #cfccc8;"></div>
<svg style="left:914.3px;top:590.5px;" width="8" height="12" viewBox="0 0 8 12"><path d="M1 4.800L4 1.600L7 4.800z M1 7.200L4 10.400L7 7.200z" fill="#5a5a5a"/></svg>
<span class="t" style="left:886px;top:590.44px;font-size:12px;color:#000;transform:scaleX(0.8683);">07</span>
<span class="t" style="left:821.7px;top:620.59px;font-size:11px;color:#000;transform:scaleX(0.9643);">Aliq. Pis %</span>
<div style="left:883px;top:615px;width:44px;height:21px;background:#fff;border:1px solid #b9b5b0;"></div>
<span class="t" style="left:903.24px;top:618.84px;font-size:12px;color:#000;transform:scaleX(0.91);">0,00</span>
<span class="t" style="left:804.8px;top:649.19px;font-size:11px;color:#000;transform:scaleX(0.9871);">Aliq. Cofins %</span>
<div style="left:883px;top:644px;width:44px;height:21px;background:#fff;border:1px solid #b9b5b0;"></div>
<span class="t" style="left:903.24px;top:648.04px;font-size:12px;color:#000;transform:scaleX(0.91);">0,00</span>
<span class="t" style="left:692.6px;top:691.39px;font-size:11px;color:#000;transform:scaleX(0.9438);">Cód. Benefício Fiscal</span>
<div style="left:798px;top:686px;width:134px;height:21px;background:#fff;border:1px solid #b9b5b0;"></div>
<div style="left:939px;top:542px;width:120px;height:55px;border:1px solid #c6bebb;border-radius:5px;box-shadow:inset 0 0 0 1px rgba(255,255,255,.55);"></div>
<div style="left:943px;top:537px;width:18px;height:11px;background:#efebe7;"></div>
<span class="t" style="left:945.4px;top:535.89px;font-size:11px;color:#000;transform:scaleX(1.0258);">IPI</span>
<span class="t" style="left:968.4px;top:553.09px;font-size:11px;color:#000;transform:scaleX(0.8682);">CST</span>
<div style="left:995px;top:546px;width:49px;height:21px;background:#fff;border:1px solid #f4f2ef;"></div>
<div style="left:1028px;top:546px;width:17px;height:21px;background:#f1efed;border-left:1px solid #cfccc8;"></div>
<svg style="left:1032.8px;top:550.5px;" width="8" height="12" viewBox="0 0 8 12"><path d="M1 4.800L4 1.600L7 4.800z M1 7.200L4 10.400L7 7.200z" fill="#5a5a5a"/></svg>
<span class="t" style="left:998.2px;top:550.14px;font-size:12px;color:#000;transform:scaleX(0.8833);">53</span>
<span class="t" style="left:949px;top:578.29px;font-size:11px;color:#000;transform:scaleX(0.9536);">Alíquota</span>
<div style="left:995px;top:571px;width:50px;height:21px;background:#fff;border:1px solid #b9b5b0;"></div>
<span class="t" style="left:1021.14px;top:574.84px;font-size:12px;color:#000;transform:scaleX(0.91);">0,00</span>
<div style="left:939px;top:607px;width:120px;height:100px;border:1px solid #c6bebb;border-radius:5px;box-shadow:inset 0 0 0 1px rgba(255,255,255,.55);"></div>
<div style="left:943px;top:602px;width:37px;height:11px;background:#efebe7;"></div>
<span class="t" style="left:945.4px;top:601.19px;font-size:11px;color:#000;">Outros</span>
<span class="t" style="left:956.7px;top:625.29px;font-size:11px;color:#000;transform:scaleX(0.8926);">% FCP</span>
<div style="left:995px;top:620px;width:50px;height:21px;background:#fff;border:1px solid #b9b5b0;"></div>
<span class="t" style="left:1021.14px;top:624.04px;font-size:12px;color:#000;transform:scaleX(0.91);">0,00</span>
<span class="t" style="left:957.7px;top:652.39px;font-size:11px;color:#000;transform:scaleX(0.9258);">% MVA</span>
<div style="left:995px;top:647px;width:50px;height:21px;background:#fff;border:1px solid #b9b5b0;"></div>
<span class="t" style="left:1021.14px;top:651.14px;font-size:12px;color:#000;transform:scaleX(0.91);">0,00</span>
<span class="t" style="left:948.4px;top:671.39px;font-size:11px;color:#000;transform:scaleX(0.9493);">% Base</span>
<span class="t" style="left:947.5px;top:684.29px;font-size:11px;color:#000;transform:scaleX(0.9336);">Reduzida</span>
<div style="left:995px;top:675px;width:50px;height:21px;background:#fff;border:1px solid #b9b5b0;"></div>
<span class="t" style="left:1021.14px;top:678.84px;font-size:12px;color:#000;transform:scaleX(0.91);">0,00</span>
<span class="t" style="left:1107.4px;top:509.69px;font-size:11px;color:#000;transform:scaleX(0.9852);">Dois cliques para alterar a foto.</span>
<div style="left:1109px;top:526px;width:147px;height:201px;border:1px solid #b2aeaa;"></div>
<div style="left:1110px;top:554px;width:145px;height:145px;background:#fff;"></div>
<div style="left:1264px;top:516px;width:121px;height:211px;border:1px solid #c6bebb;border-radius:5px;box-shadow:inset 0 0 0 1px rgba(255,255,255,.55);"></div>
<div style="left:1269px;top:511px;width:58px;height:11px;background:#efebe7;"></div>
<span class="t" style="left:1270.6px;top:509.49px;font-size:11px;color:#000;transform:scaleX(0.9567);">Parâmetros</span>
<div style="left:1270px;top:530px;width:13px;height:12px;background:linear-gradient(#f28a5e,#e86f3f);border:1px solid #d4623a;border-radius:2px;"></div>
<svg style="left:1270.3px;top:529.5px;" width="13" height="13" viewBox="0 0 13 13"><path d="M3.2 6.8L5.4 9.6L10 3.4" stroke="#7a2a10" stroke-width="1.5" fill="none"/></svg>
<span class="t" style="left:1287.5px;top:531.29px;font-size:11px;color:#000;">Ativo</span>
<div style="left:1270px;top:546px;width:13px;height:13px;background:linear-gradient(#f28a5e,#e86f3f);border:1px solid #d4623a;border-radius:2px;"></div>
<svg style="left:1270.3px;top:546.4px;" width="13" height="13" viewBox="0 0 13 13"><path d="M3.2 6.8L5.4 9.6L10 3.4" stroke="#7a2a10" stroke-width="1.5" fill="none"/></svg>
<span class="t" style="left:1287.5px;top:548.19px;font-size:11px;color:#000;transform:scaleX(0.8971);">É Fiscal</span>
<div style="left:1270px;top:563px;width:13px;height:13px;background:#fff;border:1px solid #c9c5c0;border-radius:2px;"></div>
<span class="t" style="left:1287.5px;top:565.09px;font-size:11px;color:#000;transform:scaleX(0.9272);">Paga Comissão</span>
<div style="left:1270px;top:580px;width:13px;height:12px;background:#fff;border:1px solid #c9c5c0;border-radius:2px;"></div>
<span class="t" style="left:1287.5px;top:581.29px;font-size:11px;color:#000;transform:scaleX(0.9658);">Preço Variavel</span>
<div style="left:1270px;top:595px;width:13px;height:13px;background:#fff;border:1px solid #c9c5c0;border-radius:2px;"></div>
<span class="t" style="left:1287.5px;top:596.69px;font-size:11px;color:#000;transform:scaleX(0.9241);">Composição</span>
<div style="left:1270px;top:611px;width:13px;height:13px;background:#fff;border:1px solid #c9c5c0;border-radius:2px;"></div>
<span class="t" style="left:1287.5px;top:612.69px;font-size:11px;color:#000;transform:scaleX(0.9404);">Serviço</span>
<div style="left:1270px;top:626px;width:13px;height:14px;background:#fff;border:1px solid #c9c5c0;border-radius:2px;"></div>
<span class="t" style="left:1287.5px;top:628.29px;font-size:11px;color:#000;transform:scaleX(0.9451);">Grade</span>
<div style="left:1270px;top:642px;width:13px;height:14px;background:#fff;border:1px solid #c9c5c0;border-radius:2px;"></div>
<span class="t" style="left:1287.5px;top:644.29px;font-size:11px;color:#000;transform:scaleX(0.9775);">Usar Tab. Preço</span>
<div style="left:1270px;top:658px;width:13px;height:14px;background:linear-gradient(#f28a5e,#e86f3f);border:1px solid #d4623a;border-radius:2px;"></div>
<span class="t" style="left:1287.5px;top:660.29px;font-size:11px;color:#000;transform:scaleX(0.9503);">Combustível</span>
<div style="left:1270px;top:675px;width:13px;height:13px;background:#fff;border:1px solid #c9c5c0;border-radius:2px;"></div>
<span class="t" style="left:1287.5px;top:676.69px;font-size:11px;color:#000;transform:scaleX(0.944);">Usa IMEI</span>
<div style="left:1270px;top:691px;width:13px;height:13px;background:#fff;border:1px solid #c9c5c0;border-radius:2px;"></div>
<span class="t" style="left:1287.5px;top:692.99px;font-size:11px;color:#000;">Contr. Est. Grade</span>
<div style="left:1270px;top:709px;width:13px;height:13px;background:linear-gradient(#f28a5e,#e86f3f);border:1px solid #d4623a;border-radius:2px;"></div>
<svg style="left:1270.3px;top:709.3px;" width="13" height="13" viewBox="0 0 13 13"><path d="M3.2 6.8L5.4 9.6L10 3.4" stroke="#7a2a10" stroke-width="1.5" fill="none"/></svg>
<span class="t" style="left:1287.5px;top:711.09px;font-size:11px;color:#000;transform:scaleX(0.9894);">Mostrar no App</span>
<div style="left:539px;top:745px;width:150px;height:51px;background:#4f4f4f;border:1px solid #3c3c3c;border-radius:3px;"></div>
<div style="left:696px;top:745px;width:150px;height:51px;background:#4f4f4f;border:1px solid #3c3c3c;border-radius:3px;"></div>
<svg style="left:564px;top:756px;" width="28" height="28" viewBox="0 0 28 28"><defs><radialGradient id="gg" cx="0.4" cy="0.3" r="0.8"><stop offset="0" stop-color="#b8e86a"/><stop offset="0.6" stop-color="#7cc52e"/><stop offset="1" stop-color="#4f9a14"/></radialGradient></defs>
<circle cx="14" cy="14" r="13" fill="url(#gg)" stroke="#4a8f12" stroke-width="1"/><path d="M7.5 14.5L12 19.5L21 8.5" stroke="#fff" stroke-width="3.2" fill="none" stroke-linecap="round" stroke-linejoin="round"/></svg>
<svg style="left:724px;top:756px;" width="28" height="28" viewBox="0 0 28 28"><defs><radialGradient id="gr" cx="0.4" cy="0.3" r="0.8"><stop offset="0" stop-color="#ff7a6a"/><stop offset="0.6" stop-color="#e8352a"/><stop offset="1" stop-color="#b81410"/></radialGradient></defs>
<circle cx="14" cy="14" r="13" fill="url(#gr)" stroke="#a81510" stroke-width="1"/><path d="M10 10L18 18M18 10L10 18" stroke="#fff" stroke-width="3.4" stroke-linecap="round"/></svg>
<span class="t" style="left:598px;top:763.06px;font-size:16px;color:#dedede;transform:scaleX(0.8692);">F5 | Salvar</span>
<span class="t" style="left:758.4px;top:763.06px;font-size:16px;color:#dedede;transform:scaleX(0.8306);">ESC | Sair</span>
<span class="t" style="left:1052px;top:753.73px;font-size:14.5px;color:#000;transform:scaleX(1.0133);">* As opções Grade e Composição estarão</span>
<span class="t" style="left:1052px;top:773.63px;font-size:14.5px;color:#000;transform:scaleX(1.0177);">disponíveis somente na edição desse item.</span>
<svg style="left:1130px;top:559px;" width="105" height="134" viewBox="0 0 105 134"><defs><clipPath id="pc"><rect width="105" height="134"/></clipPath>
<filter id="pb" x="-5%" y="-5%" width="110%" height="110%"><feGaussianBlur stdDeviation="0.45"/></filter></defs>
<g clip-path="url(#pc)" filter="url(#pb)">
<rect width="105" height="134" fill="#dedee3"/>
<path d="M-2 40C0 12 30 2 62 3C90 4 108 18 108 40V136H-2z" fill="#45241a"/>
<g fill="none" stroke-linecap="round">
<path d="M38 8C70 2 100 14 103 44" stroke="#7c4c35" stroke-width="4"/>
<path d="M46 16C72 10 94 24 97 52" stroke="#6a3d2a" stroke-width="3"/>
<path d="M60 24C80 24 90 40 90 58" stroke="#7c4c35" stroke-width="2.500"/>
<path d="M2 52C6 84 30 104 62 104" stroke="#7a4a32" stroke-width="5"/>
<path d="M10 50C16 78 36 94 64 96" stroke="#5e3424" stroke-width="3"/>
<path d="M22 56C28 74 44 86 62 88" stroke="#84523a" stroke-width="3"/>
<path d="M0 100C20 122 50 126 70 120" stroke="#5e3424" stroke-width="4"/>
</g>
<!-- white band -->
<path d="M-1 78C12 98 36 108 70 109V101C40 100 16 90 -1 70z" fill="#f1ebe0"/>
<path d="M-1 86C12 106 38 116 70 116V109C36 108 12 98 -1 78z" fill="#f0a92a"/>
<path d="M6 96C18 108 38 113 56 113.500" stroke="#c8261a" stroke-width="1.800" fill="none" stroke-dasharray="2.200 1"/>
<g font-family="Liberation Sans" font-weight="bold" font-size="6.800" fill="#2a1810"><text transform="translate(8.2 85.2) rotate(46)" x="0" y="0">C</text><text transform="translate(12.0 88.8) rotate(41)" x="0" y="0">H</text><text transform="translate(15.9 92.1) rotate(37)" x="0" y="0">O</text><text transform="translate(20.1 94.9) rotate(32)" x="0" y="0">C</text><text transform="translate(24.4 97.4) rotate(28)" x="0" y="0">O</text><text transform="translate(28.9 99.5) rotate(23)" x="0" y="0">L</text><text transform="translate(33.6 101.3) rotate(19)" x="0" y="0">A</text><text transform="translate(38.4 102.8) rotate(16)" x="0" y="0">T</text><text transform="translate(43.5 104.1) rotate(12)" x="0" y="0">E</text></g>
<!-- hair -->
<path d="M38 64C30 42 48 24 70 22C88 20 98 32 96 50C96 58 92 64 89 67C87 54 80 48 70 50C58 52 50 58 45 72z" fill="#86431c"/>
<path d="M52 40C60 32 74 30 84 34M48 50C58 40 72 38 86 44" stroke="#4e2210" stroke-width="1.800" fill="none"/>
<path d="M60 26C56 18 66 14 70 19C75 12 86 16 82 25z" fill="#86431c"/>
<!-- face -->
<path d="M44 70C42 56 56 50 70 50C84 50 90 60 88 72C86 88 74 96 64 94C52 92 46 82 44 70z" fill="#efb58d"/>
<ellipse cx="91.500" cy="67.500" rx="3.800" ry="5" fill="#e5a47c"/>
<path d="M48 60C54 54 60 54 64 57M70 52C76 48 82 50 85 54" stroke="#5a2812" stroke-width="1.800" fill="none"/>
<!-- eyes -->
<ellipse cx="55.500" cy="75" rx="6.500" ry="7" fill="#fff"/><ellipse cx="77" cy="67" rx="7" ry="7.500" fill="#fff"/>
<circle cx="56.500" cy="75.500" r="3.600" fill="#5a2c14"/><circle cx="76" cy="68" r="3.800" fill="#5a2c14"/><circle cx="56.500" cy="75.500" r="1.600" fill="#140a06"/><circle cx="76" cy="68" r="1.700" fill="#140a06"/>
<!-- glasses -->
<path d="M45 72C46 66 60 64 64 68C66 76 62 86 54 86C48 86 44 80 45 72zM66 63C70 56 86 54 88 60C90 70 84 78 76 78C70 78 66 72 66 63zM64 70L66 66" fill="none" stroke="#2746a6" stroke-width="2.200"/>
<!-- mouth -->
<path d="M62 87C68 88 74 85 78 80C78 88 70 93 64 91z" fill="#7a1e14"/><path d="M64 87.500C68 87.500 73 85.500 76.500 82.500L76 85C72 88 67 89.500 64.500 89z" fill="#fff"/>
</g>
<!-- body -->
<path d="M68 96C76 92 86 92 92 98L104 112V136H74C72 122 68 108 68 96z" fill="#2f63c4"/>
<path d="M84 100C92 110 98 124 100 136" stroke="#1f4794" stroke-width="3" fill="none"/>
<path d="M68 96L58 108L64 116L74 106z" fill="#2a58b2"/>
<path d="M88 98L98 92L104 100L94 108z" fill="#2a58b2"/>
<!-- chest logo -->
<circle cx="77" cy="111" r="7.500" fill="#fff"/><circle cx="77" cy="111" r="6" fill="none" stroke="#e03a20" stroke-width="1.500"/><circle cx="77" cy="111" r="3.800" fill="#f4b21e"/>
<!-- fists -->
<path d="M50 106C54 102 62 104 64 108C66 114 64 120 58 120C52 120 48 112 50 106z" fill="#f4c41c"/>
<path d="M85 96C88 88 100 86 104 92C106 100 102 108 94 108C88 108 84 102 85 96z" fill="#f4c41c"/>
<path d="M54 106v8M58 105v9M90 93v9M95 91v10" stroke="#c8960c" stroke-width="1"/>
<!-- logo top-left -->
<circle cx="19.500" cy="15" r="10" fill="#f6f2ee"/><circle cx="19.500" cy="15" r="8" fill="none" stroke="#de3522" stroke-width="2"/><circle cx="19.500" cy="15" r="5.200" fill="none" stroke="#f08a20" stroke-width="1.600"/><circle cx="19.500" cy="15" r="3.300" fill="#f3b21c"/>
<!-- PIRA KIDS -->
<g transform="translate(1 -7) rotate(-21 36 36)" font-family="Liberation Sans" font-weight="bold" font-style="italic" stroke-linejoin="round">
<text x="6" y="44" font-size="21" fill="#fff" stroke="#fff" stroke-width="5" letter-spacing="0.500">PIRA</text>
<text x="22" y="59" font-size="15.500" fill="#fff" stroke="#fff" stroke-width="4.500" letter-spacing="0.500">KIDS</text>
<text x="6" y="44" font-size="21" fill="#1a48c6" stroke="#1a48c6" stroke-width="1.300" letter-spacing="0.500">PIRA</text>
<text x="22" y="59" font-size="15.500" fill="#1a48c6" stroke="#1a48c6" stroke-width="1" letter-spacing="0.500">KIDS</text>
</g>
<!-- side barcode text -->
<rect x="4.200" y="52" width="3" height="23" fill="#9a8a84" opacity="0.800"/>
<!-- bottom text -->
<g font-family="Liberation Sans" fill="#f4f0ee" font-weight="bold">
<text x="5" y="118" font-size="8" textLength="17" lengthAdjust="spacingAndGlyphs">200 ml</text>
<text x="5" y="125.500" font-size="7.500" textLength="41" lengthAdjust="spacingAndGlyphs">BEBIDA LÁCTEA UHT</text>
<text x="5" y="133" font-size="7.500" textLength="38" lengthAdjust="spacingAndGlyphs">SABOR CHOCOLATE</text>
<text x="45" y="132.500" font-size="3" textLength="31" lengthAdjust="spacingAndGlyphs" font-weight="normal">CONTÉM AROMATIZANTE</text>
</g>
</g></svg>

</body></html>
